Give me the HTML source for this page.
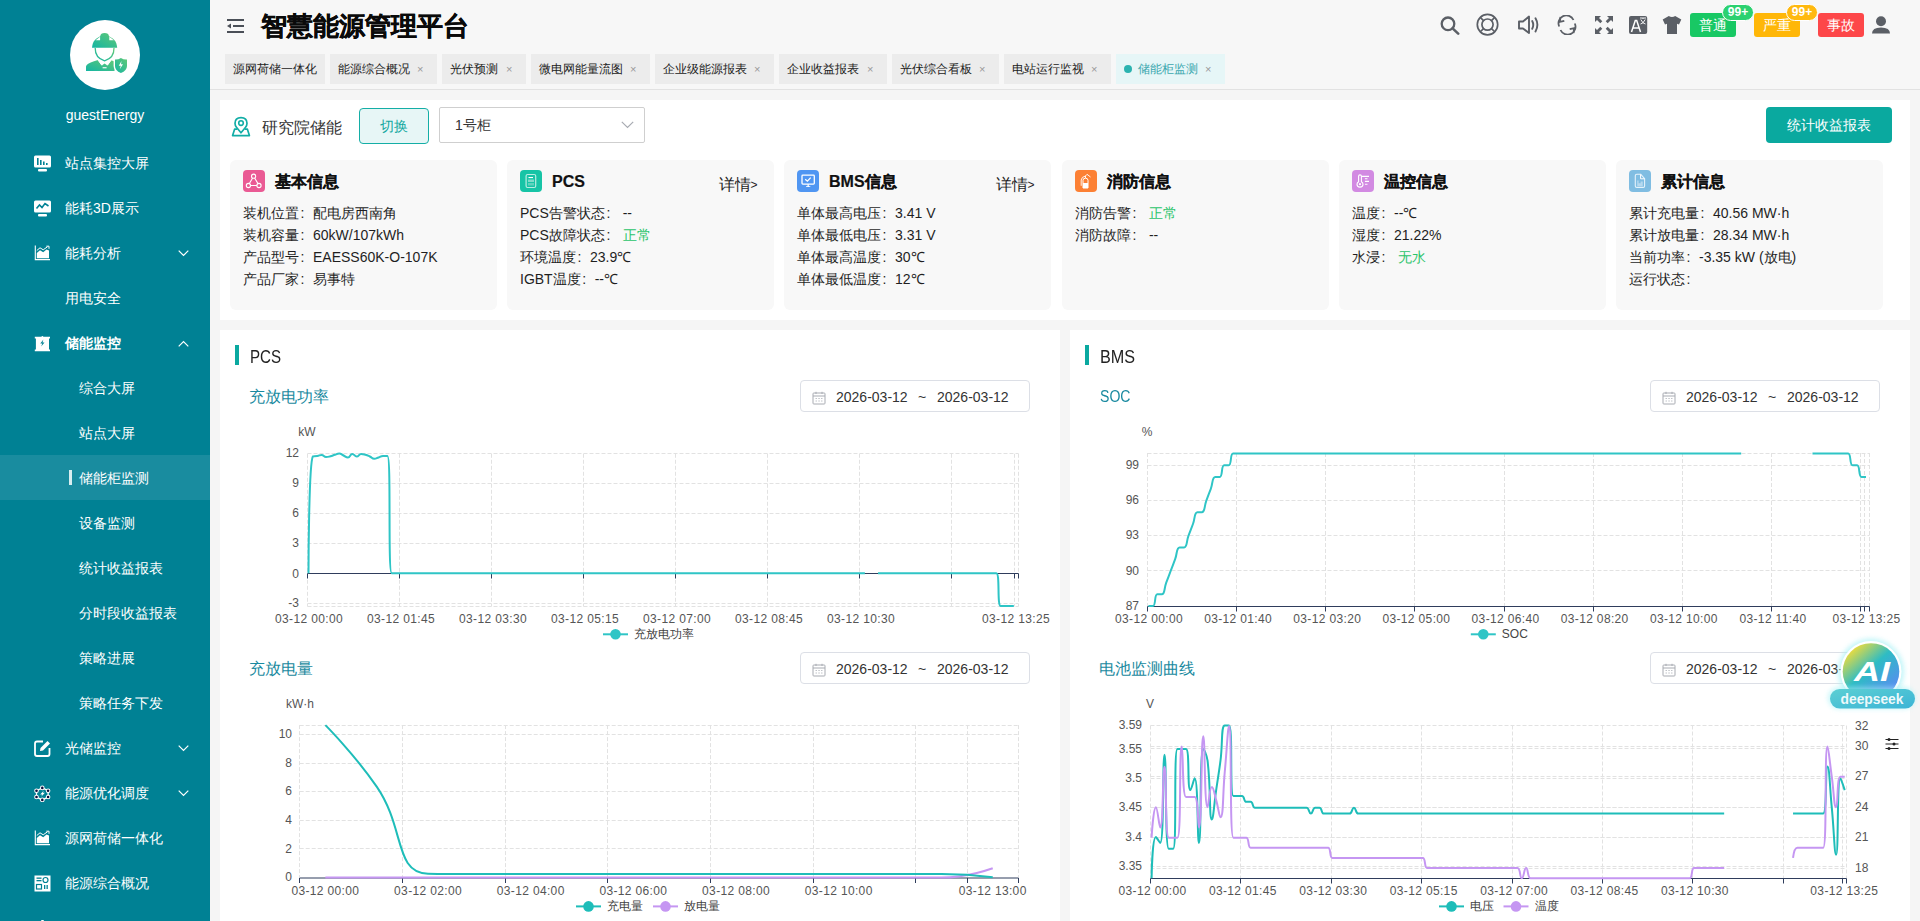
<!DOCTYPE html><html><head><meta charset="utf-8"><style>
*{box-sizing:border-box;margin:0;padding:0}
html,body{width:1920px;height:921px;overflow:hidden}
body{position:relative;background:#f5f5f5;font-family:"Liberation Sans",sans-serif;color:#333}
.a{position:absolute;white-space:nowrap}
#side{position:absolute;left:0;top:0;width:210px;height:921px;background:#008194;color:#fff;overflow:hidden}
#side .it{position:absolute;left:0;width:210px;height:45px;font-size:14px;line-height:45px}
#side .it span{position:absolute;left:65px;top:1px}
#side .sub span{left:79px}
#side .ic{position:absolute;left:34px;top:15px;width:17px;height:17px}
#side .chev{position:absolute;left:178px;top:20px;width:11px;height:7px}
#hdr{position:absolute;left:210px;top:0;width:1710px;height:90px;background:#f7f7f7;border-bottom:1px solid #e2e2e2}
.tab{position:absolute;top:54px;height:30px;background:#ececec;font-size:12px;line-height:30px;color:#222}
.tab b{position:absolute;left:8px;top:0;font-weight:normal}
.tab i{position:absolute;top:0;font-style:normal;color:#999;font-size:11px}
.panel{position:absolute;background:#fff}
.card{position:absolute;top:160px;width:267px;height:150px;background:#f8f8f8;border-radius:6px}
.card .ci{position:absolute;left:13px;top:10px;width:22px;height:22px;border-radius:4px}
.card .ct{position:absolute;left:45px;top:10px;font-size:16px;font-weight:bold;line-height:24px;color:#111;-webkit-text-stroke:0.2px #111}
.card .ln{position:absolute;left:13px;font-size:14px;line-height:22px;color:#1f1f1f}
.card .det{position:absolute;left:211.5px;top:14px;font-size:16px;line-height:22px;color:#1f1f1f}
.green{color:#2bc46b}
.cl{display:inline-block;width:14px;font-style:normal;padding-left:1.6px}
.sec{position:absolute;font-size:18px;color:#222;line-height:24px}
.bar{position:absolute;width:4px;height:20px;background:#0aa9a0}
.ctitle{position:absolute;font-size:16px;color:#1a8aa0;line-height:20px}
.dp{position:absolute;width:230px;height:32px;border:1px solid #dcdfe6;border-radius:4px;background:#fff;font-size:14px;color:#333}
.hic{position:absolute;top:14px}
.badge{position:absolute;top:13px;width:46px;height:24px;border-radius:3px;color:#fff;font-size:14px;line-height:24px;text-align:center}
.pill{position:absolute;top:4px;width:32px;height:17px;border-radius:9px;border:1px solid #fff;color:#fff;font-size:12px;font-weight:bold;line-height:15px;text-align:center}
</style></head><body>
<div id="side">
<div class="a" style="left:70px;top:20px;width:70px;height:70px;border-radius:50%;background:#fff"></div>
<svg class="a" style="left:75px;top:25px" width="60" height="60" viewBox="0 0 60 60">
<defs><linearGradient id="ag" x1="0" y1="1" x2="1" y2="0"><stop offset="0" stop-color="#14b5a3"/><stop offset="1" stop-color="#62c976"/></linearGradient></defs>
<path d="M17 22.8 L17.3 20.8 Q18 16 21.5 13.5 L25.2 11.2 Q25.6 8 29.6 8 Q33.6 8 34 11.2 L37.7 13.5 Q41.2 16 41.9 20.8 L42.2 22.8 Z" fill="url(#ag)"/><path d="M20.6 15.2 L25.1 11.8 L25.1 15.3 Z M38.9 15.2 L34.3 11.8 L34.3 15.3 Z" fill="#fff"/>
<path d="M20.2 23 Q20 33 29.6 35.8 Q39.2 33 39 23" stroke="url(#ag)" stroke-width="1.3" fill="none"/>
<path d="M11 46 V41.5 Q11.5 38.5 19 36.3 L23 35 L26.8 40.5 L29.6 38.5 L32.4 40.5 L36.2 35.2 L39.5 36.5 L39.5 46 Z" fill="url(#ag)"/>
<rect x="27.6" y="42.2" width="4" height="1.1" fill="#fff"/><path d="M23 35 L26.8 40.2 M36.2 35 L32.4 40.2" stroke="#fff" stroke-width="1"/>
<path d="M45.6 32.3 Q42.5 34.3 38.6 33.8 V41 Q38.6 46 45.6 48.6 Q52.4 46 52.4 41 V33.8 Q48.6 34.3 45.6 32.3 Z" fill="#fff"/>
<path d="M45.9 33 Q43.3 34.8 40 34.6 V41 Q40 45.5 45.9 48 Q52 45.5 52 41 V34.6 Q48.5 34.8 45.9 33 Z" fill="url(#ag)"/>
<path d="M46.5 36 L43.8 40.8 H45.8 L44.8 44.3 L48 39.3 H46 Z" fill="#fff"/>
</svg>
<div class="a" style="left:0;top:105px;width:210px;text-align:center;font-size:14px;line-height:20px">guestEnergy</div>
<div class="it" style="top:140px"><svg class="ic" viewBox="0 0 17 17"><rect x="0" y="0.5" width="17" height="12" rx="1.5" fill="#fff"/><rect x="3" y="3" width="1.6" height="7" fill="#008194"/><rect x="6" y="5" width="1.6" height="5" fill="#008194"/><rect x="9" y="6.5" width="1.6" height="3.5" fill="#008194"/><rect x="12" y="8" width="1.6" height="2" fill="#008194"/><rect x="4" y="14" width="9" height="2.5" rx="1" fill="#fff"/></svg><span style="">站点集控大屏</span></div>
<div class="it" style="top:185px"><svg class="ic" viewBox="0 0 17 17"><rect x="0" y="0.5" width="17" height="12" rx="1.5" fill="#fff"/><path d="M2.5 8.5 L5.5 5 L8 7.5 L11 3.5 L14.5 6" stroke="#008194" stroke-width="1.6" fill="none"/><rect x="4" y="14" width="9" height="2.5" rx="1" fill="#fff"/></svg><span style="">能耗3D展示</span></div>
<div class="it" style="top:230px"><svg class="ic" viewBox="0 0 17 17"><path d="M1.3 0.5 V14.6 H16" stroke="#fff" stroke-width="1.1" fill="none"/><path d="M2.8 13.3 V8 L6 5.2 L9.2 7.2 L12.5 4.5 L15 5.5 V13.3 Z" fill="#fff"/><path d="M2.8 5.5 L6 2.8 L9.2 4.8 L13.5 1.8" stroke="#fff" stroke-width="1" fill="none"/><path d="M12.3 1.2 H15 V3.8" stroke="#fff" stroke-width="1" fill="none"/></svg><span style="">能耗分析</span><svg class="chev" viewBox="0 0 11 7"><path d="M0.7 0.7 L5.5 5.5 L10.3 0.7" stroke="#fff" stroke-width="1.2" fill="none"/></svg></div>
<div class="it" style="top:275px"><span style="">用电安全</span></div>
<div class="it" style="top:320px"><svg class="ic" viewBox="0 0 17 17"><path d="M0.8 1.8 H7.3 Q8.4 0.3 9.5 1.8 H16 V3.6 H15 V14.4 H16 V16.2 H0.8 V14.4 H1.9 V3.6 H0.8 Z" fill="#fff"/><path d="M9.4 4.6 L6.3 8.6 H8.3 L7.2 11.5 L10.5 7.4 H8.5 Z" fill="#008194"/></svg><span style="font-weight:bold">储能监控</span><svg class="chev" viewBox="0 0 11 7"><path d="M0.7 6.3 L5.5 1.5 L10.3 6.3" stroke="#fff" stroke-width="1.2" fill="none"/></svg></div>
<div class="it sub" style="top:365px"><span style="">综合大屏</span></div>
<div class="it sub" style="top:410px"><span style="">站点大屏</span></div>
<div class="it sub" style="top:455px;background:#198c9f"><div class="a" style="left:69px;top:15px;width:3px;height:15px;background:#d8eef0"></div><span style="">储能柜监测</span></div>
<div class="it sub" style="top:500px"><span style="">设备监测</span></div>
<div class="it sub" style="top:545px"><span style="">统计收益报表</span></div>
<div class="it sub" style="top:590px"><span style="">分时段收益报表</span></div>
<div class="it sub" style="top:635px"><span style="">策略进展</span></div>
<div class="it sub" style="top:680px"><span style="">策略任务下发</span></div>
<div class="it" style="top:725px"><svg class="ic" viewBox="0 0 17 17"><path d="M9 1.5 H3 Q1 1.5 1 3.5 V14 Q1 16 3 16 H13.5 Q15.5 16 15.5 14 V8" stroke="#fff" stroke-width="1.8" fill="none"/><path d="M6 11 L6.5 8 L13.5 1 L16 3.5 L9 10.5 Z" fill="#fff"/></svg><span style="">光储监控</span><svg class="chev" viewBox="0 0 11 7"><path d="M0.7 0.7 L5.5 5.5 L10.3 0.7" stroke="#fff" stroke-width="1.2" fill="none"/></svg></div>
<div class="it" style="top:770px"><svg class="ic" viewBox="0 0 17 17"><path d="M8.3 2.9 L14.1 5.7 L14.1 12 L8.3 14.9 L2.5 12 L2.5 5.7 Z" stroke="#fff" stroke-width="1.3" fill="none"/><circle cx="8.3" cy="2.9" r="2.3" fill="#fff"/><circle cx="8.3" cy="2.9" r="1.3" fill="#0b0d3a"/><circle cx="14.1" cy="5.7" r="2.3" fill="#fff"/><circle cx="14.1" cy="5.7" r="1.3" fill="#0b0d3a"/><circle cx="14.1" cy="12" r="2.3" fill="#fff"/><circle cx="14.1" cy="12" r="1.3" fill="#0b0d3a"/><circle cx="8.3" cy="14.9" r="2.3" fill="#fff"/><circle cx="8.3" cy="14.9" r="1.3" fill="#0b0d3a"/><circle cx="2.5" cy="12" r="2.3" fill="#fff"/><circle cx="2.5" cy="12" r="1.3" fill="#0b0d3a"/><circle cx="2.5" cy="5.7" r="2.3" fill="#fff"/><circle cx="2.5" cy="5.7" r="1.3" fill="#0b0d3a"/><path d="M9.9 5.5 L6.2 9.5 H8.3 L7.2 11.8 L10.9 7.7 H8.7 Z" fill="#fff"/></svg><span style="">能源优化调度</span><svg class="chev" viewBox="0 0 11 7"><path d="M0.7 0.7 L5.5 5.5 L10.3 0.7" stroke="#fff" stroke-width="1.2" fill="none"/></svg></div>
<div class="it" style="top:815px"><svg class="ic" viewBox="0 0 17 17"><path d="M1.3 0.5 V14.6 H16" stroke="#fff" stroke-width="1.1" fill="none"/><path d="M2.8 13.3 V8 L6 5.2 L9.2 7.2 L12.5 4.5 L15 5.5 V13.3 Z" fill="#fff"/><path d="M2.8 5.5 L6 2.8 L9.2 4.8 L13.5 1.8" stroke="#fff" stroke-width="1" fill="none"/><path d="M12.3 1.2 H15 V3.8" stroke="#fff" stroke-width="1" fill="none"/></svg><span style="">源网荷储一体化</span></div>
<div class="it" style="top:860px"><svg class="ic" viewBox="0 0 17 17"><rect x="0.5" y="0.5" width="16" height="16" fill="#fff"/><rect x="2.5" y="2.5" width="5" height="1.3" fill="#008194"/><rect x="2.5" y="5" width="5" height="1.3" fill="#008194"/><circle cx="11.5" cy="5" r="2.5" stroke="#008194" stroke-width="1.2" fill="none"/><rect x="2.5" y="9.5" width="5" height="4.5" stroke="#008194" stroke-width="1.2" fill="none"/><rect x="10" y="10" width="1.3" height="4" fill="#008194"/><rect x="12.5" y="10" width="1.3" height="4" fill="#008194"/></svg><span style="">能源综合概况</span></div>
<div class="it" style="top:905px"><div class="a" style="left:41px;top:15px;width:3px;height:2px;background:#fff;border-radius:1px 1px 0 0"></div></div>
</div>
<div id="hdr">
<svg class="a" style="left:17px;top:19px" width="17" height="14" viewBox="0 0 17 14"><rect x="0" y="0" width="17" height="2" fill="#4a4f57"/><rect x="6" y="6" width="11" height="2" fill="#4a4f57"/><rect x="0" y="12" width="17" height="2" fill="#4a4f57"/><path d="M0 7 L4 4.5 V9.5 Z" fill="#4a4f57"/></svg>
<div class="a" style="left:51px;top:8px;font-size:26px;font-weight:bold;color:#0a0a0a;line-height:36px;-webkit-text-stroke:0.35px #0a0a0a">智慧能源管理平台</div>
<div class="tab" style="left:15px;width:100px"><b>源网荷储一体化</b></div>
<div class="tab" style="left:120px;width:107px"><b>能源综合概况</b><i style="left:87px">×</i></div>
<div class="tab" style="left:232px;width:84px"><b>光伏预测</b><i style="left:64px">×</i></div>
<div class="tab" style="left:321px;width:119px"><b>微电网能量流图</b><i style="left:99px">×</i></div>
<div class="tab" style="left:445px;width:119px"><b>企业级能源报表</b><i style="left:99px">×</i></div>
<div class="tab" style="left:569px;width:108px"><b>企业收益报表</b><i style="left:88px">×</i></div>
<div class="tab" style="left:682px;width:107px"><b>光伏综合看板</b><i style="left:87px">×</i></div>
<div class="tab" style="left:794px;width:107px"><b>电站运行监视</b><i style="left:87px">×</i></div>
<div class="tab" style="left:906px;width:109px;background:#e6f6f7;color:#3aa6ae"><div class="a" style="left:8px;top:11px;width:8px;height:8px;border-radius:50%;background:#2bb3b0"></div><b style="left:22px">储能柜监测</b><i style="left:89px">×</i></div>
</div>
<svg class="a" style="left:1440px;top:16px" width="20" height="19" viewBox="0 0 20 19"><circle cx="8" cy="7.8" r="6.3" stroke="#5b5f66" stroke-width="2.3" fill="none"/><path d="M12.6 12.4 L18.2 17.6" stroke="#5b5f66" stroke-width="2.6" stroke-linecap="round"/></svg>
<svg class="a" style="left:1476px;top:13px" width="23" height="23" viewBox="0 0 23 23"><circle cx="11.5" cy="11.6" r="10.2" stroke="#5b5f66" stroke-width="1.7" fill="none"/><circle cx="11.5" cy="11.6" r="5.6" stroke="#5b5f66" stroke-width="1.7" fill="none"/><path d="M4.3 4.4 L7.5 7.6 M18.7 4.4 L15.5 7.6 M4.3 18.8 L7.5 15.6 M18.7 18.8 L15.5 15.6" stroke="#5b5f66" stroke-width="1.6"/></svg>
<svg class="a" style="left:1517px;top:15px" width="23" height="20" viewBox="0 0 23 20"><path d="M2 6.5 H6 L12 1.5 V18 L6 13.5 H2 Z" stroke="#5b5f66" stroke-width="1.9" fill="none" stroke-linejoin="round"/><path d="M15.2 6 Q17.3 9.8 15.2 13.8" stroke="#5b5f66" stroke-width="1.9" fill="none" stroke-linecap="round"/><path d="M18.5 3.3 Q22.3 9.8 18.5 16.5" stroke="#5b5f66" stroke-width="1.9" fill="none" stroke-linecap="round"/></svg>
<svg class="a" style="left:1557px;top:15px" width="20" height="20" viewBox="0 0 20 20"><path d="M2.2 11.5 A7.8 7.8 0 0 1 16.5 5" stroke="#5b5f66" stroke-width="1.8" fill="none"/><path d="M17.8 8.5 A7.8 7.8 0 0 1 3.5 15" stroke="#5b5f66" stroke-width="1.8" fill="none"/><path d="M3.5 2 L2.8 6.8 L7.3 5.8" stroke="#5b5f66" stroke-width="1.8" fill="none"/><path d="M16.5 18 L17.2 13.2 L12.7 14.2" stroke="#5b5f66" stroke-width="1.8" fill="none"/></svg>
<svg class="a" style="left:1594px;top:15px" width="20" height="20" viewBox="0 0 20 20"><g fill="#5b5f66"><path d="M1 1 H7 L5 3 L8.3 6.3 L6.3 8.3 L3 5 L1 7 Z"/><path d="M19 1 H13 L15 3 L11.7 6.3 L13.7 8.3 L17 5 L19 7 Z"/><path d="M1 19 H7 L5 17 L8.3 13.7 L6.3 11.7 L3 15 L1 13 Z"/><path d="M19 19 H13 L15 17 L11.7 13.7 L13.7 11.7 L17 15 L19 13 Z"/></g></svg>
<svg class="a" style="left:1628px;top:15px" width="20" height="20" viewBox="0 0 20 20"><rect x="1" y="1" width="18.2" height="18" rx="2" fill="#5b5f66"/><path d="M3.5 17 L7.3 5.5 H8.7 L12.5 17 M5 13 H11" stroke="#fff" stroke-width="1.5" fill="none"/><path d="M12 3 H18 M15 3 V4 M12.8 4.5 Q15 9 17.5 9 M17.2 4.5 Q15 9 12.5 9" stroke="#fff" stroke-width="0.9" fill="none"/></svg>
<svg class="a" style="left:1662px;top:15px" width="20" height="20" viewBox="0 0 20 20"><path d="M6.8 1 Q10 3 13.2 1 L19.3 4.5 L17 9.5 L15 8.8 V19 H5 V8.8 L3 9.5 L0.7 4.5 Z" fill="#5b5f66"/></svg>
<svg class="a" style="left:1871px;top:15px" width="20" height="20" viewBox="0 0 20 20"><ellipse cx="10" cy="6.3" rx="5" ry="5" fill="#5b5f66"/><path d="M1 18.5 Q1 12.5 10 12.5 Q19 12.5 19 18.5 Z" fill="#5b5f66"/></svg>
<div class="badge" style="left:1690px;background:#18c864">普通</div>
<div class="pill" style="left:1722px;background:#2cd170">99+</div>
<div class="badge" style="left:1754px;background:#ffb708">严重</div>
<div class="pill" style="left:1786px;background:#ffb90f">99+</div>
<div class="badge" style="left:1818px;background:#fd4749">事故</div>
<div class="panel" style="left:220px;top:100px;width:1690px;height:220px"></div>
<svg class="a" style="left:230px;top:116px" width="22" height="22" viewBox="0 0 22 22"><path d="M11 16.8 L6.6 11.5 Q5 9.6 5 7.3 Q5 1.6 11 1.6 Q17 1.6 17 7.3 Q17 9.6 15.4 11.5 Z" stroke="#12ada6" stroke-width="1.7" fill="none" stroke-linejoin="round"/><circle cx="11" cy="7.1" r="2.3" stroke="#12ada6" stroke-width="1.6" fill="none"/><path d="M7.2 13.2 H4.6 L2.6 19.6 H19.4 L17.4 13.2 H14.8" stroke="#12ada6" stroke-width="1.7" fill="none" stroke-linejoin="round"/></svg>
<div class="a" style="left:262px;top:117px;font-size:16px;line-height:22px;color:#333">研究院储能</div>
<div class="a" style="left:359px;top:108px;width:70px;height:36px;border:1px solid #14aea6;border-radius:4px;background:#e7f6f6;color:#14a8a0;font-size:14px;line-height:34px;text-align:center">切换</div>
<div class="a" style="left:439px;top:107px;width:206px;height:36px;border:1px solid #cfcfcf;border-radius:2px;background:#fff;color:#333;font-size:14px;line-height:34px;padding-left:15px">1号柜</div>
<svg class="a" style="left:621px;top:121px" width="13" height="8" viewBox="0 0 13 8"><path d="M0.8 0.8 L6.5 6.5 L12.2 0.8" stroke="#a8abb2" stroke-width="1.2" fill="none"/></svg>
<div class="a" style="left:1766px;top:107px;width:126px;height:36px;border-radius:4px;background:#0aa99f;color:#fff;font-size:14px;line-height:36px;text-align:center">统计收益报表</div>
<div class="card" style="left:230px"><div class="ci" style="background:#ea5a94"><svg viewBox="0 0 22 22" width="22" height="22"><g stroke="#fff" stroke-width="1.1" fill="none"><circle cx="10.6" cy="6.2" r="2.1"/><circle cx="5.4" cy="15.5" r="2.1"/><circle cx="16" cy="15.5" r="2.1"/><path d="M9.6 8 L6.4 13.6 M11.6 8 L15 13.6 M7.5 15.5 H13.9"/></g></svg></div><div class="ct">基本信息</div><div class="ln" style="top:42px">装机位置<i class="cl">:</i>配电房西南角</div><div class="ln" style="top:64px">装机容量<i class="cl">:</i>60kW/107kWh</div><div class="ln" style="top:86px">产品型号<i class="cl">:</i>EAESS60K-O-107K</div><div class="ln" style="top:108px">产品厂家<i class="cl">:</i>易事特</div></div>
<div class="card" style="left:507px"><div class="ci" style="background:#17c4a6"><svg viewBox="0 0 22 22" width="22" height="22"><rect x="6.1" y="4.5" width="9.6" height="13" rx="1.5" stroke="#b9ede2" stroke-width="1.2" fill="none"/><rect x="8.5" y="7" width="4.5" height="1.1" fill="#fff"/><rect x="8" y="9.5" width="6" height="2.5" fill="#7fdccb"/><rect x="8" y="13" width="6" height="2.5" fill="#5fd3bd"/></svg></div><div class="ct">PCS</div><div class="det">详情<span style="font-size:12px;position:relative;top:-1px">&gt;</span></div><div class="ln" style="top:42px">PCS告警状态<i class="cl">:</i>&nbsp;--</div><div class="ln" style="top:64px">PCS故障状态<i class="cl">:</i><span class="green">&nbsp;正常</span></div><div class="ln" style="top:86px">环境温度<i class="cl">:</i>23.9℃</div><div class="ln" style="top:108px">IGBT温度<i class="cl">:</i>--℃</div></div>
<div class="card" style="left:784px"><div class="ci" style="background:#5096f2"><svg viewBox="0 0 22 22" width="22" height="22"><rect x="5" y="5.2" width="12.3" height="8.9" rx="0.8" stroke="#fff" stroke-width="1.3" fill="none"/><path d="M8.2 9.2 L10.4 11.2 L13.7 7.6" stroke="#fff" stroke-width="1.3" fill="none"/><path d="M10.5 14.2 H11.8 V16.3 H13.3 V17 H9 V16.3 H10.5 Z" fill="#fff"/></svg></div><div class="ct">BMS信息</div><div class="det">详情<span style="font-size:12px;position:relative;top:-1px">&gt;</span></div><div class="ln" style="top:42px">单体最高电压<i class="cl">:</i>3.41 V</div><div class="ln" style="top:64px">单体最低电压<i class="cl">:</i>3.31 V</div><div class="ln" style="top:86px">单体最高温度<i class="cl">:</i>30℃</div><div class="ln" style="top:108px">单体最低温度<i class="cl">:</i>12℃</div></div>
<div class="card" style="left:1062px"><div class="ci" style="background:#fc8034"><svg viewBox="0 0 22 22" width="22" height="22"><path d="M8 18 V10.3 Q8 8.2 10.5 8.2 Q13 8.2 13 10.3 V18 Z" fill="none" stroke="#fff" stroke-width="1"/><rect x="8" y="13" width="5" height="5" fill="#fff"/><path d="M6.2 15.8 V10 Q6.5 6.8 10.5 6 L12 4.3 L15.5 7 M10.5 6 L10.5 8" stroke="#fff" stroke-width="0.9" fill="none"/></svg></div><div class="ct">消防信息</div><div class="ln" style="top:42px">消防告警<i class="cl">:</i><span class="green">&nbsp;正常</span></div><div class="ln" style="top:64px">消防故障<i class="cl">:</i>&nbsp;--</div></div>
<div class="card" style="left:1339px"><div class="ci" style="background:#d28ae2"><svg viewBox="0 0 22 22" width="22" height="22"><path d="M6.6 11.8 V6.2 Q6.6 4.9 8 4.9 Q9.4 4.9 9.4 6.2 V11.8 Q11 12.8 11 14.3 Q11 17.1 8 17.1 Q5 17.1 5 14.3 Q5 12.8 6.6 11.8 Z" stroke="#fff" stroke-width="1.1" fill="none"/><circle cx="8" cy="14.2" r="1.1" fill="#fff"/><path d="M9.4 6.4 H17 M12.9 8.7 H15.5 M12.9 11.4 H17 M12.9 14.2 H15.5" stroke="#fff" stroke-width="1.1"/></svg></div><div class="ct">温控信息</div><div class="ln" style="top:42px">温度<i class="cl">:</i>--℃</div><div class="ln" style="top:64px">湿度<i class="cl">:</i>21.22%</div><div class="ln" style="top:86px">水浸<i class="cl">:</i><span class="green">&nbsp;无水</span></div></div>
<div class="card" style="left:1616px"><div class="ci" style="background:#80bde2"><svg viewBox="0 0 22 22" width="22" height="22"><path d="M6.3 5.8 Q6.3 4.3 7.8 4.3 H11.8 L15.6 8.6 V16 Q15.6 17.4 14.2 17.4 H7.8 Q6.3 17.4 6.3 16 Z" stroke="#e5f3fb" stroke-width="1.1" fill="none"/><path d="M11.6 4.5 V8.8 H15.4" stroke="#fff" stroke-width="1" fill="none"/><path d="M8.2 16.3 V10.5 H9.6 V13.3 H11.6 V11.5 H13.8 V16.3 Z" fill="#b6d9ef"/></svg></div><div class="ct">累计信息</div><div class="ln" style="top:42px">累计充电量<i class="cl">:</i>40.56 MW·h</div><div class="ln" style="top:64px">累计放电量<i class="cl">:</i>28.34 MW·h</div><div class="ln" style="top:86px">当前功率<i class="cl">:</i>-3.35 kW (放电)</div><div class="ln" style="top:108px">运行状态<i class="cl">:</i></div></div>
<div class="panel" style="left:220px;top:330px;width:840px;height:600px"></div>
<div class="panel" style="left:1070px;top:330px;width:840px;height:600px"></div>
<div class="bar" style="left:235px;top:345px"></div>
<div class="sec" style="left:250px;top:344.5px;transform:scaleX(0.84);transform-origin:0 0">PCS</div>
<div class="bar" style="left:1085px;top:345px"></div>
<div class="sec" style="left:1100px;top:344.5px;transform:scaleX(0.9);transform-origin:0 0">BMS</div>
<div class="ctitle" style="left:249px;top:387px">充放电功率</div>
<div class="ctitle" style="left:249px;top:659px">充放电量</div>
<div class="ctitle" style="left:1100px;top:387px;transform:scaleX(0.88);transform-origin:0 0">SOC</div>
<div class="ctitle" style="left:1099px;top:659px">电池监测曲线</div>
<div class="dp" style="left:800px;top:380px"><svg class="a" style="left:11px;top:10px" width="14" height="14" viewBox="0 0 14 14"><rect x="1" y="2" width="12" height="11" rx="0.8" stroke="#a8abb2" stroke-width="1" fill="none"/><path d="M1 5 H13 M4 0.8 V3 M10 0.8 V3" stroke="#a8abb2" stroke-width="1"/><path d="M3.5 7.5 H5 M6.3 7.5 H7.8 M9 7.5 H10.5 M3.5 10 H5 M6.3 10 H7.8 M9 10 H10.5" stroke="#c0c3c8" stroke-width="1"/></svg><span class="a" style="left:35px;top:8px;line-height:16px">2026-03-12</span><span class="a" style="left:117px;top:8px;line-height:16px">~</span><span class="a" style="left:136px;top:8px;line-height:16px">2026-03-12</span></div>
<div class="dp" style="left:800px;top:652px"><svg class="a" style="left:11px;top:10px" width="14" height="14" viewBox="0 0 14 14"><rect x="1" y="2" width="12" height="11" rx="0.8" stroke="#a8abb2" stroke-width="1" fill="none"/><path d="M1 5 H13 M4 0.8 V3 M10 0.8 V3" stroke="#a8abb2" stroke-width="1"/><path d="M3.5 7.5 H5 M6.3 7.5 H7.8 M9 7.5 H10.5 M3.5 10 H5 M6.3 10 H7.8 M9 10 H10.5" stroke="#c0c3c8" stroke-width="1"/></svg><span class="a" style="left:35px;top:8px;line-height:16px">2026-03-12</span><span class="a" style="left:117px;top:8px;line-height:16px">~</span><span class="a" style="left:136px;top:8px;line-height:16px">2026-03-12</span></div>
<div class="dp" style="left:1650px;top:380px"><svg class="a" style="left:11px;top:10px" width="14" height="14" viewBox="0 0 14 14"><rect x="1" y="2" width="12" height="11" rx="0.8" stroke="#a8abb2" stroke-width="1" fill="none"/><path d="M1 5 H13 M4 0.8 V3 M10 0.8 V3" stroke="#a8abb2" stroke-width="1"/><path d="M3.5 7.5 H5 M6.3 7.5 H7.8 M9 7.5 H10.5 M3.5 10 H5 M6.3 10 H7.8 M9 10 H10.5" stroke="#c0c3c8" stroke-width="1"/></svg><span class="a" style="left:35px;top:8px;line-height:16px">2026-03-12</span><span class="a" style="left:117px;top:8px;line-height:16px">~</span><span class="a" style="left:136px;top:8px;line-height:16px">2026-03-12</span></div>
<div class="dp" style="left:1650px;top:652px"><svg class="a" style="left:11px;top:10px" width="14" height="14" viewBox="0 0 14 14"><rect x="1" y="2" width="12" height="11" rx="0.8" stroke="#a8abb2" stroke-width="1" fill="none"/><path d="M1 5 H13 M4 0.8 V3 M10 0.8 V3" stroke="#a8abb2" stroke-width="1"/><path d="M3.5 7.5 H5 M6.3 7.5 H7.8 M9 7.5 H10.5 M3.5 10 H5 M6.3 10 H7.8 M9 10 H10.5" stroke="#c0c3c8" stroke-width="1"/></svg><span class="a" style="left:35px;top:8px;line-height:16px">2026-03-12</span><span class="a" style="left:117px;top:8px;line-height:16px">~</span><span class="a" style="left:136px;top:8px;line-height:16px">2026-03-12</span></div>
<svg class="a" style="left:0;top:0" width="1920" height="921" viewBox="0 0 1920 921" font-family="Liberation Sans, sans-serif"><line x1="307.5" y1="453.5" x2="1018.5" y2="453.5" stroke="#e2e2e2" stroke-width="1" stroke-dasharray="4 2"/><text x="299" y="457.4000000000001" text-anchor="end" font-size="12" fill="#555">12</text><line x1="307.5" y1="483.5" x2="1018.5" y2="483.5" stroke="#e2e2e2" stroke-width="1" stroke-dasharray="4 2"/><text x="299" y="487.25000000000006" text-anchor="end" font-size="12" fill="#555">9</text><line x1="307.5" y1="513.5" x2="1018.5" y2="513.5" stroke="#e2e2e2" stroke-width="1" stroke-dasharray="4 2"/><text x="299" y="517.1" text-anchor="end" font-size="12" fill="#555">6</text><line x1="307.5" y1="543.5" x2="1018.5" y2="543.5" stroke="#e2e2e2" stroke-width="1" stroke-dasharray="4 2"/><text x="299" y="546.95" text-anchor="end" font-size="12" fill="#555">3</text><line x1="307.5" y1="603.5" x2="1018.5" y2="603.5" stroke="#e2e2e2" stroke-width="1" stroke-dasharray="4 2"/><text x="299" y="606.6500000000001" text-anchor="end" font-size="12" fill="#555">-3</text><text x="299" y="577.5" text-anchor="end" font-size="12" fill="#555">0</text><line x1="307.5" y1="606.5" x2="1018.5" y2="606.5" stroke="#e2e2e2" stroke-width="1" stroke-dasharray="4 2"/><line x1="307.5" y1="453.8" x2="307.5" y2="606.5" stroke="#e2e2e2" stroke-width="1" stroke-dasharray="4 2"/><line x1="399.5" y1="453.8" x2="399.5" y2="606.5" stroke="#e2e2e2" stroke-width="1" stroke-dasharray="4 2"/><line x1="491.5" y1="453.8" x2="491.5" y2="606.5" stroke="#e2e2e2" stroke-width="1" stroke-dasharray="4 2"/><line x1="583.5" y1="453.8" x2="583.5" y2="606.5" stroke="#e2e2e2" stroke-width="1" stroke-dasharray="4 2"/><line x1="675.5" y1="453.8" x2="675.5" y2="606.5" stroke="#e2e2e2" stroke-width="1" stroke-dasharray="4 2"/><line x1="767.5" y1="453.8" x2="767.5" y2="606.5" stroke="#e2e2e2" stroke-width="1" stroke-dasharray="4 2"/><line x1="859.5" y1="453.8" x2="859.5" y2="606.5" stroke="#e2e2e2" stroke-width="1" stroke-dasharray="4 2"/><line x1="951.5" y1="453.8" x2="951.5" y2="606.5" stroke="#e2e2e2" stroke-width="1" stroke-dasharray="4 2"/><line x1="1014.5" y1="453.8" x2="1014.5" y2="606.5" stroke="#e2e2e2" stroke-width="1" stroke-dasharray="4 2"/><line x1="1018.5" y1="453.8" x2="1018.5" y2="606.5" stroke="#e2e2e2" stroke-width="1" stroke-dasharray="4 2"/><line x1="307.5" y1="573.5" x2="1018.5" y2="573.5" stroke="#2f3d5c" stroke-width="1"/><line x1="307.5" y1="573.5" x2="307.5" y2="578.5" stroke="#2f3d5c" stroke-width="1"/><line x1="399.5" y1="573.5" x2="399.5" y2="578.5" stroke="#2f3d5c" stroke-width="1"/><line x1="491.5" y1="573.5" x2="491.5" y2="578.5" stroke="#2f3d5c" stroke-width="1"/><line x1="583.5" y1="573.5" x2="583.5" y2="578.5" stroke="#2f3d5c" stroke-width="1"/><line x1="675.5" y1="573.5" x2="675.5" y2="578.5" stroke="#2f3d5c" stroke-width="1"/><line x1="767.5" y1="573.5" x2="767.5" y2="578.5" stroke="#2f3d5c" stroke-width="1"/><line x1="859.5" y1="573.5" x2="859.5" y2="578.5" stroke="#2f3d5c" stroke-width="1"/><line x1="951.5" y1="573.5" x2="951.5" y2="578.5" stroke="#2f3d5c" stroke-width="1"/><line x1="1014.5" y1="573.5" x2="1014.5" y2="578.5" stroke="#2f3d5c" stroke-width="1"/><line x1="1018.5" y1="573.5" x2="1018.5" y2="578.5" stroke="#2f3d5c" stroke-width="1"/><text x="309.0" y="623" text-anchor="middle" font-size="12" fill="#555" letter-spacing="0.35">03-12 00:00</text><text x="401.001" y="623" text-anchor="middle" font-size="12" fill="#555" letter-spacing="0.35">03-12 01:45</text><text x="493.002" y="623" text-anchor="middle" font-size="12" fill="#555" letter-spacing="0.35">03-12 03:30</text><text x="585.003" y="623" text-anchor="middle" font-size="12" fill="#555" letter-spacing="0.35">03-12 05:15</text><text x="677.004" y="623" text-anchor="middle" font-size="12" fill="#555" letter-spacing="0.35">03-12 07:00</text><text x="769.005" y="623" text-anchor="middle" font-size="12" fill="#555" letter-spacing="0.35">03-12 08:45</text><text x="861.0060000000001" y="623" text-anchor="middle" font-size="12" fill="#555" letter-spacing="0.35">03-12 10:30</text><text x="1016" y="623" text-anchor="middle" font-size="12" fill="#555" letter-spacing="0.35">03-12 13:25</text><text x="307" y="436" text-anchor="middle" font-size="12" fill="#555">kW</text><path d="M308.50 573.20 C308.50 573.20 308.66 464.24 312.88 456.29 C313.04 455.99 315.10 456.29 317.26 455.99 C319.48 455.68 319.54 454.99 321.64 454.99 C323.92 454.99 323.74 457.08 326.02 457.08 C328.12 457.08 328.26 456.85 330.40 456.29 C332.64 455.70 332.59 455.52 334.79 454.80 C336.97 454.08 337.04 453.40 339.17 453.40 C341.42 453.40 341.36 454.45 343.55 455.49 C345.74 456.54 345.92 457.58 347.93 457.58 C350.30 457.58 350.00 453.90 352.31 453.90 C354.38 453.90 354.50 456.59 356.69 456.59 C358.88 456.59 358.72 453.90 361.07 453.90 C363.11 453.90 363.33 454.07 365.45 454.70 C367.71 455.36 367.69 455.49 369.83 456.49 C372.07 457.53 371.94 458.78 374.22 458.78 C376.32 458.78 376.42 458.17 378.60 457.48 C380.80 456.78 380.73 455.99 382.98 455.99 C385.11 455.99 387.20 455.99 387.36 455.99 C391.58 455.99 387.52 573.20 391.74 573.20 C391.90 573.20 393.93 573.20 396.12 573.20 C398.31 573.20 398.31 573.20 400.50 573.20 C402.69 573.20 402.69 573.20 404.88 573.20 C407.07 573.20 407.07 573.20 409.26 573.20 C411.45 573.20 411.45 573.20 413.64 573.20 C415.83 573.20 415.83 573.20 418.02 573.20 C420.22 573.20 420.22 573.20 422.41 573.20 C424.60 573.20 424.60 573.20 426.79 573.20 C428.98 573.20 428.98 573.20 431.17 573.20 C433.36 573.20 433.36 573.20 435.55 573.20 C437.74 573.20 437.74 573.20 439.93 573.20 C442.12 573.20 442.12 573.20 444.31 573.20 C446.50 573.20 446.50 573.20 448.69 573.20 C450.88 573.20 450.88 573.20 453.07 573.20 C455.26 573.20 455.26 573.20 457.45 573.20 C459.64 573.20 459.64 573.20 461.84 573.20 C464.03 573.20 464.03 573.20 466.22 573.20 C468.41 573.20 468.41 573.20 470.60 573.20 C472.79 573.20 472.79 573.20 474.98 573.20 C477.17 573.20 477.17 573.20 479.36 573.20 C481.55 573.20 481.55 573.20 483.74 573.20 C485.93 573.20 485.93 573.20 488.12 573.20 C490.31 573.20 490.31 573.20 492.50 573.20 C494.69 573.20 494.69 573.20 496.88 573.20 C499.07 573.20 499.07 573.20 501.26 573.20 C503.45 573.20 503.45 573.20 505.64 573.20 C507.84 573.20 507.84 573.20 510.03 573.20 C512.22 573.20 512.22 573.20 514.41 573.20 C516.60 573.20 516.60 573.20 518.79 573.20 C520.98 573.20 520.98 573.20 523.17 573.20 C525.36 573.20 525.36 573.20 527.55 573.20 C529.74 573.20 529.74 573.20 531.93 573.20 C534.12 573.20 534.12 573.20 536.31 573.20 C538.50 573.20 538.50 573.20 540.69 573.20 C542.88 573.20 542.88 573.20 545.07 573.20 C547.26 573.20 547.26 573.20 549.46 573.20 C551.65 573.20 551.65 573.20 553.84 573.20 C556.03 573.20 556.03 573.20 558.22 573.20 C560.41 573.20 560.41 573.20 562.60 573.20 C564.79 573.20 564.79 573.20 566.98 573.20 C569.17 573.20 569.17 573.20 571.36 573.20 C573.55 573.20 573.55 573.20 575.74 573.20 C577.93 573.20 577.93 573.20 580.12 573.20 C582.31 573.20 582.31 573.20 584.50 573.20 C586.69 573.20 586.69 573.20 588.88 573.20 C591.07 573.20 591.07 573.20 593.26 573.20 C595.46 573.20 595.46 573.20 597.65 573.20 C599.84 573.20 599.84 573.20 602.03 573.20 C604.22 573.20 604.22 573.20 606.41 573.20 C608.60 573.20 608.60 573.20 610.79 573.20 C612.98 573.20 612.98 573.20 615.17 573.20 C617.36 573.20 617.36 573.20 619.55 573.20 C621.74 573.20 621.74 573.20 623.93 573.20 C626.12 573.20 626.12 573.20 628.31 573.20 C630.50 573.20 630.50 573.20 632.69 573.20 C634.88 573.20 634.88 573.20 637.08 573.20 C639.27 573.20 639.27 573.20 641.46 573.20 C643.65 573.20 643.65 573.20 645.84 573.20 C648.03 573.20 648.03 573.20 650.22 573.20 C652.41 573.20 652.41 573.20 654.60 573.20 C656.79 573.20 656.79 573.20 658.98 573.20 C661.17 573.20 661.17 573.20 663.36 573.20 C665.55 573.20 665.55 573.20 667.74 573.20 C669.93 573.20 669.93 573.20 672.12 573.20 C674.31 573.20 674.31 573.20 676.50 573.20 C678.69 573.20 678.69 573.20 680.88 573.20 C683.08 573.20 683.08 573.20 685.27 573.20 C687.46 573.20 687.46 573.20 689.65 573.20 C691.84 573.20 691.84 573.20 694.03 573.20 C696.22 573.20 696.22 573.20 698.41 573.20 C700.60 573.20 700.60 573.20 702.79 573.20 C704.98 573.20 704.98 573.20 707.17 573.20 C709.36 573.20 709.36 573.20 711.55 573.20 C713.74 573.20 713.74 573.20 715.93 573.20 C718.12 573.20 718.12 573.20 720.31 573.20 C722.50 573.20 722.50 573.20 724.70 573.20 C726.89 573.20 726.89 573.20 729.08 573.20 C731.27 573.20 731.27 573.20 733.46 573.20 C735.65 573.20 735.65 573.20 737.84 573.20 C740.03 573.20 740.03 573.20 742.22 573.20 C744.41 573.20 744.41 573.20 746.60 573.20 C748.79 573.20 748.79 573.20 750.98 573.20 C753.17 573.20 753.17 573.20 755.36 573.20 C757.55 573.20 757.55 573.20 759.74 573.20 C761.93 573.20 761.93 573.20 764.12 573.20 C766.31 573.20 766.31 573.20 768.50 573.20 C770.70 573.20 770.70 573.20 772.89 573.20 C775.08 573.20 775.08 573.20 777.27 573.20 C779.46 573.20 779.46 573.20 781.65 573.20 C783.84 573.20 783.84 573.20 786.03 573.20 C788.22 573.20 788.22 573.20 790.41 573.20 C792.60 573.20 792.60 573.20 794.79 573.20 C796.98 573.20 796.98 573.20 799.17 573.20 C801.36 573.20 801.36 573.20 803.55 573.20 C805.74 573.20 805.74 573.20 807.93 573.20 C810.12 573.20 810.12 573.20 812.32 573.20 C814.51 573.20 814.51 573.20 816.70 573.20 C818.89 573.20 818.89 573.20 821.08 573.20 C823.27 573.20 823.27 573.20 825.46 573.20 C827.65 573.20 827.65 573.20 829.84 573.20 C832.03 573.20 832.03 573.20 834.22 573.20 C836.41 573.20 836.41 573.20 838.60 573.20 C840.79 573.20 840.79 573.20 842.98 573.20 C845.17 573.20 845.17 573.20 847.36 573.20 C849.55 573.20 849.55 573.20 851.74 573.20 C853.93 573.20 853.93 573.20 856.12 573.20 C858.32 573.20 858.32 573.20 860.51 573.20 C862.70 573.20 864.89 573.20 864.89 573.20" stroke="#2fc5c6" stroke-width="2" fill="none" stroke-linejoin="round"/><path d="M878.03 573.20 C878.03 573.20 880.22 573.20 882.41 573.20 C884.60 573.20 884.60 573.20 886.79 573.20 C888.98 573.20 888.98 573.20 891.17 573.20 C893.36 573.20 893.36 573.20 895.55 573.20 C897.74 573.20 897.74 573.20 899.94 573.20 C902.13 573.20 902.13 573.20 904.32 573.20 C906.51 573.20 906.51 573.20 908.70 573.20 C910.89 573.20 910.89 573.20 913.08 573.20 C915.27 573.20 915.27 573.20 917.46 573.20 C919.65 573.20 919.65 573.20 921.84 573.20 C924.03 573.20 924.03 573.20 926.22 573.20 C928.41 573.20 928.41 573.20 930.60 573.20 C932.79 573.20 932.79 573.20 934.98 573.20 C937.17 573.20 937.17 573.20 939.36 573.20 C941.55 573.20 941.55 573.20 943.75 573.20 C945.94 573.20 945.94 573.20 948.13 573.20 C950.32 573.20 950.32 573.20 952.51 573.20 C954.70 573.20 954.70 573.20 956.89 573.20 C959.08 573.20 959.08 573.20 961.27 573.20 C963.46 573.20 963.46 573.20 965.65 573.20 C967.84 573.20 967.84 573.20 970.03 573.20 C972.22 573.20 972.22 573.20 974.41 573.20 C976.60 573.20 976.60 573.20 978.79 573.20 C980.98 573.20 980.98 573.20 983.17 573.20 C985.36 573.20 985.36 573.20 987.56 573.20 C989.75 573.20 989.75 573.20 991.94 573.20 C994.13 573.20 995.81 573.20 996.32 573.20 C1000.19 573.20 996.83 606.04 1000.70 606.04 C1001.21 606.04 1002.89 606.04 1005.08 606.04 C1007.27 606.04 1007.27 606.04 1009.46 606.04 C1011.65 606.04 1013.84 606.04 1013.84 606.04" stroke="#2fc5c6" stroke-width="2" fill="none" stroke-linejoin="round"/><line x1="603" y1="634.3" x2="628" y2="634.3" stroke="#2fc5c6" stroke-width="2"/><circle cx="615.5" cy="634.3" r="5.3" fill="#2fc5c6"/><text x="634" y="638.0999999999999" text-anchor="start" font-size="12" fill="#444">充放电功率</text><line x1="299.7" y1="725.5" x2="1018.4" y2="725.5" stroke="#e2e2e2" stroke-width="1" stroke-dasharray="4 2"/><line x1="299.7" y1="734.5" x2="1018.4" y2="734.5" stroke="#e2e2e2" stroke-width="1" stroke-dasharray="4 2"/><line x1="299.7" y1="763.5" x2="1018.4" y2="763.5" stroke="#e2e2e2" stroke-width="1" stroke-dasharray="4 2"/><line x1="299.7" y1="791.5" x2="1018.4" y2="791.5" stroke="#e2e2e2" stroke-width="1" stroke-dasharray="4 2"/><line x1="299.7" y1="820.5" x2="1018.4" y2="820.5" stroke="#e2e2e2" stroke-width="1" stroke-dasharray="4 2"/><line x1="299.7" y1="848.5" x2="1018.4" y2="848.5" stroke="#e2e2e2" stroke-width="1" stroke-dasharray="4 2"/><text x="292" y="738.0000000000001" text-anchor="end" font-size="12" fill="#555">10</text><text x="292" y="766.64" text-anchor="end" font-size="12" fill="#555">8</text><text x="292" y="795.2800000000001" text-anchor="end" font-size="12" fill="#555">6</text><text x="292" y="823.9200000000001" text-anchor="end" font-size="12" fill="#555">4</text><text x="292" y="852.5600000000001" text-anchor="end" font-size="12" fill="#555">2</text><text x="292" y="881.2" text-anchor="end" font-size="12" fill="#555">0</text><line x1="299.5" y1="725.1" x2="299.5" y2="877.6" stroke="#e2e2e2" stroke-width="1" stroke-dasharray="4 2"/><line x1="402.5" y1="725.1" x2="402.5" y2="877.6" stroke="#e2e2e2" stroke-width="1" stroke-dasharray="4 2"/><line x1="505.5" y1="725.1" x2="505.5" y2="877.6" stroke="#e2e2e2" stroke-width="1" stroke-dasharray="4 2"/><line x1="607.5" y1="725.1" x2="607.5" y2="877.6" stroke="#e2e2e2" stroke-width="1" stroke-dasharray="4 2"/><line x1="710.5" y1="725.1" x2="710.5" y2="877.6" stroke="#e2e2e2" stroke-width="1" stroke-dasharray="4 2"/><line x1="813.5" y1="725.1" x2="813.5" y2="877.6" stroke="#e2e2e2" stroke-width="1" stroke-dasharray="4 2"/><line x1="915.5" y1="725.1" x2="915.5" y2="877.6" stroke="#e2e2e2" stroke-width="1" stroke-dasharray="4 2"/><line x1="967.5" y1="725.1" x2="967.5" y2="877.6" stroke="#e2e2e2" stroke-width="1" stroke-dasharray="4 2"/><line x1="1018.5" y1="725.1" x2="1018.5" y2="877.6" stroke="#e2e2e2" stroke-width="1" stroke-dasharray="4 2"/><line x1="299.7" y1="878" x2="1018.4" y2="878" stroke="#2f3d5c" stroke-width="1"/><line x1="299.5" y1="878" x2="299.5" y2="883" stroke="#2f3d5c" stroke-width="1"/><line x1="402.5" y1="878" x2="402.5" y2="883" stroke="#2f3d5c" stroke-width="1"/><line x1="505.5" y1="878" x2="505.5" y2="883" stroke="#2f3d5c" stroke-width="1"/><line x1="607.5" y1="878" x2="607.5" y2="883" stroke="#2f3d5c" stroke-width="1"/><line x1="710.5" y1="878" x2="710.5" y2="883" stroke="#2f3d5c" stroke-width="1"/><line x1="813.5" y1="878" x2="813.5" y2="883" stroke="#2f3d5c" stroke-width="1"/><line x1="915.5" y1="878" x2="915.5" y2="883" stroke="#2f3d5c" stroke-width="1"/><line x1="967.5" y1="878" x2="967.5" y2="883" stroke="#2f3d5c" stroke-width="1"/><line x1="1018.5" y1="878" x2="1018.5" y2="883" stroke="#2f3d5c" stroke-width="1"/><text x="325.36785714285713" y="895" text-anchor="middle" font-size="12" fill="#555" letter-spacing="0.35">03-12 00:00</text><text x="428.0392857142857" y="895" text-anchor="middle" font-size="12" fill="#555" letter-spacing="0.35">03-12 02:00</text><text x="530.7107142857143" y="895" text-anchor="middle" font-size="12" fill="#555" letter-spacing="0.35">03-12 04:00</text><text x="633.3821428571429" y="895" text-anchor="middle" font-size="12" fill="#555" letter-spacing="0.35">03-12 06:00</text><text x="736.0535714285714" y="895" text-anchor="middle" font-size="12" fill="#555" letter-spacing="0.35">03-12 08:00</text><text x="838.7250000000001" y="895" text-anchor="middle" font-size="12" fill="#555" letter-spacing="0.35">03-12 10:00</text><text x="992.7321428571429" y="895" text-anchor="middle" font-size="12" fill="#555" letter-spacing="0.35">03-12 13:00</text><text x="300" y="708" text-anchor="middle" font-size="12" fill="#555">kW·h</text><path d="M325.37 877.60 C325.37 877.60 351.04 877.60 376.70 877.60 C402.37 877.60 402.37 877.60 428.04 877.60 C453.71 877.60 453.71 877.60 479.38 877.60 C505.04 877.60 505.04 877.60 530.71 877.60 C556.38 877.60 556.38 877.60 582.05 877.60 C607.71 877.60 607.71 877.60 633.38 877.60 C659.05 877.60 659.05 877.60 684.72 877.60 C710.39 877.60 710.39 877.60 736.05 877.60 C761.72 877.60 761.72 877.60 787.39 877.60 C813.06 877.60 813.06 877.60 838.73 877.60 C864.39 877.60 864.39 877.60 890.06 877.60 C915.73 877.60 915.94 877.60 941.40 877.60 C967.27 877.60 992.73 868.29 992.73 868.29" stroke="#c596f2" stroke-width="2" fill="none" stroke-linejoin="round"/><path d="M325.37 725.09 C325.37 725.09 354.00 753.79 376.70 786.67 C405.33 828.11 394.00 873.17 428.04 873.73 C445.33 874.02 453.71 874.02 479.38 874.02 C505.04 874.02 505.04 874.02 530.71 874.02 C556.38 874.02 556.38 874.02 582.05 874.02 C607.71 874.02 607.71 874.02 633.38 874.02 C659.05 874.02 659.05 874.02 684.72 874.02 C710.39 874.02 710.39 874.02 736.05 874.02 C761.72 874.02 761.72 874.02 787.39 874.02 C813.06 874.02 813.06 874.02 838.73 874.02 C864.39 874.02 864.39 874.02 890.06 874.02 C915.73 874.02 915.75 874.02 941.40 874.02 C967.09 874.02 992.73 877.31 992.73 877.31" stroke="#1ebdb9" stroke-width="2" fill="none" stroke-linejoin="round"/><line x1="576" y1="906.4" x2="601" y2="906.4" stroke="#1ebdb9" stroke-width="2"/><circle cx="588.5" cy="906.4" r="5.3" fill="#1ebdb9"/><text x="607" y="910.1999999999999" text-anchor="start" font-size="12" fill="#444">充电量</text><line x1="653" y1="906.4" x2="678" y2="906.4" stroke="#c596f2" stroke-width="2"/><circle cx="665.5" cy="906.4" r="5.3" fill="#c596f2"/><text x="684" y="910.1999999999999" text-anchor="start" font-size="12" fill="#444">放电量</text><line x1="1147.5" y1="453.5" x2="1869.5" y2="453.5" stroke="#e2e2e2" stroke-width="1" stroke-dasharray="4 2"/><line x1="1147.5" y1="465.5" x2="1869.5" y2="465.5" stroke="#e2e2e2" stroke-width="1" stroke-dasharray="4 2"/><line x1="1147.5" y1="500.5" x2="1869.5" y2="500.5" stroke="#e2e2e2" stroke-width="1" stroke-dasharray="4 2"/><line x1="1147.5" y1="535.5" x2="1869.5" y2="535.5" stroke="#e2e2e2" stroke-width="1" stroke-dasharray="4 2"/><line x1="1147.5" y1="570.5" x2="1869.5" y2="570.5" stroke="#e2e2e2" stroke-width="1" stroke-dasharray="4 2"/><text x="1139" y="468.94000000000005" text-anchor="end" font-size="12" fill="#555">99</text><text x="1139" y="504.13000000000005" text-anchor="end" font-size="12" fill="#555">96</text><text x="1139" y="539.32" text-anchor="end" font-size="12" fill="#555">93</text><text x="1139" y="574.5100000000001" text-anchor="end" font-size="12" fill="#555">90</text><text x="1139" y="609.7" text-anchor="end" font-size="12" fill="#555">87</text><line x1="1147.5" y1="453" x2="1147.5" y2="606.1" stroke="#e2e2e2" stroke-width="1" stroke-dasharray="4 2"/><line x1="1236.5" y1="453" x2="1236.5" y2="606.1" stroke="#e2e2e2" stroke-width="1" stroke-dasharray="4 2"/><line x1="1325.5" y1="453" x2="1325.5" y2="606.1" stroke="#e2e2e2" stroke-width="1" stroke-dasharray="4 2"/><line x1="1414.5" y1="453" x2="1414.5" y2="606.1" stroke="#e2e2e2" stroke-width="1" stroke-dasharray="4 2"/><line x1="1504.5" y1="453" x2="1504.5" y2="606.1" stroke="#e2e2e2" stroke-width="1" stroke-dasharray="4 2"/><line x1="1593.5" y1="453" x2="1593.5" y2="606.1" stroke="#e2e2e2" stroke-width="1" stroke-dasharray="4 2"/><line x1="1682.5" y1="453" x2="1682.5" y2="606.1" stroke="#e2e2e2" stroke-width="1" stroke-dasharray="4 2"/><line x1="1771.5" y1="453" x2="1771.5" y2="606.1" stroke="#e2e2e2" stroke-width="1" stroke-dasharray="4 2"/><line x1="1860.5" y1="453" x2="1860.5" y2="606.1" stroke="#e2e2e2" stroke-width="1" stroke-dasharray="4 2"/><line x1="1864.5" y1="453" x2="1864.5" y2="606.1" stroke="#e2e2e2" stroke-width="1" stroke-dasharray="4 2"/><line x1="1869.5" y1="453" x2="1869.5" y2="606.1" stroke="#e2e2e2" stroke-width="1" stroke-dasharray="4 2"/><line x1="1147.5" y1="606.5" x2="1869.5" y2="606.5" stroke="#2f3d5c" stroke-width="1"/><line x1="1147.5" y1="606.5" x2="1147.5" y2="611.5" stroke="#2f3d5c" stroke-width="1"/><line x1="1236.5" y1="606.5" x2="1236.5" y2="611.5" stroke="#2f3d5c" stroke-width="1"/><line x1="1325.5" y1="606.5" x2="1325.5" y2="611.5" stroke="#2f3d5c" stroke-width="1"/><line x1="1414.5" y1="606.5" x2="1414.5" y2="611.5" stroke="#2f3d5c" stroke-width="1"/><line x1="1504.5" y1="606.5" x2="1504.5" y2="611.5" stroke="#2f3d5c" stroke-width="1"/><line x1="1593.5" y1="606.5" x2="1593.5" y2="611.5" stroke="#2f3d5c" stroke-width="1"/><line x1="1682.5" y1="606.5" x2="1682.5" y2="611.5" stroke="#2f3d5c" stroke-width="1"/><line x1="1771.5" y1="606.5" x2="1771.5" y2="611.5" stroke="#2f3d5c" stroke-width="1"/><line x1="1860.5" y1="606.5" x2="1860.5" y2="611.5" stroke="#2f3d5c" stroke-width="1"/><line x1="1864.5" y1="606.5" x2="1864.5" y2="611.5" stroke="#2f3d5c" stroke-width="1"/><line x1="1869.5" y1="606.5" x2="1869.5" y2="611.5" stroke="#2f3d5c" stroke-width="1"/><text x="1149.0" y="623" text-anchor="middle" font-size="12" fill="#555" letter-spacing="0.35">03-12 00:00</text><text x="1238.14" y="623" text-anchor="middle" font-size="12" fill="#555" letter-spacing="0.35">03-12 01:40</text><text x="1327.28" y="623" text-anchor="middle" font-size="12" fill="#555" letter-spacing="0.35">03-12 03:20</text><text x="1416.42" y="623" text-anchor="middle" font-size="12" fill="#555" letter-spacing="0.35">03-12 05:00</text><text x="1505.56" y="623" text-anchor="middle" font-size="12" fill="#555" letter-spacing="0.35">03-12 06:40</text><text x="1594.7" y="623" text-anchor="middle" font-size="12" fill="#555" letter-spacing="0.35">03-12 08:20</text><text x="1683.8400000000001" y="623" text-anchor="middle" font-size="12" fill="#555" letter-spacing="0.35">03-12 10:00</text><text x="1772.98" y="623" text-anchor="middle" font-size="12" fill="#555" letter-spacing="0.35">03-12 11:40</text><text x="1866.5" y="623" text-anchor="middle" font-size="12" fill="#555" letter-spacing="0.35">03-12 13:25</text><text x="1147" y="436" text-anchor="middle" font-size="12" fill="#555">%</text><path d="M1148.40 606.10 C1148.40 606.10 1151.69 606.10 1152.86 606.10 C1156.15 606.10 1154.03 594.37 1157.31 594.37 C1158.48 594.37 1160.60 594.37 1161.77 594.37 C1165.06 594.37 1164.00 588.50 1166.23 582.64 C1168.46 576.77 1168.46 576.78 1170.69 570.91 C1172.91 565.05 1172.91 565.05 1175.14 559.18 C1177.37 553.32 1176.31 547.45 1179.60 547.45 C1180.77 547.45 1182.89 547.45 1184.06 547.45 C1187.34 547.45 1186.28 541.59 1188.51 535.72 C1190.74 529.86 1190.74 529.86 1192.97 523.99 C1195.20 518.12 1194.14 512.26 1197.43 512.26 C1198.60 512.26 1200.72 512.26 1201.88 512.26 C1205.17 512.26 1204.11 506.40 1206.34 500.53 C1208.57 494.67 1208.57 494.67 1210.80 488.80 C1213.03 482.94 1211.97 477.07 1215.26 477.07 C1216.42 477.07 1218.54 477.07 1219.71 477.07 C1223.00 477.07 1220.88 465.34 1224.17 465.34 C1225.34 465.34 1227.46 465.34 1228.63 465.34 C1231.91 465.34 1229.79 453.61 1233.08 453.61 C1234.25 453.61 1235.31 453.61 1237.54 453.61 C1239.77 453.61 1239.77 453.61 1242.00 453.61 C1244.23 453.61 1244.23 453.61 1246.45 453.61 C1248.68 453.61 1248.68 453.61 1250.91 453.61 C1253.14 453.61 1253.14 453.61 1255.37 453.61 C1257.60 453.61 1257.60 453.61 1259.83 453.61 C1262.05 453.61 1262.05 453.61 1264.28 453.61 C1266.51 453.61 1266.51 453.61 1268.74 453.61 C1270.97 453.61 1270.97 453.61 1273.20 453.61 C1275.42 453.61 1275.42 453.61 1277.65 453.61 C1279.88 453.61 1279.88 453.61 1282.11 453.61 C1284.34 453.61 1284.34 453.61 1286.57 453.61 C1288.80 453.61 1288.80 453.61 1291.02 453.61 C1293.25 453.61 1293.25 453.61 1295.48 453.61 C1297.71 453.61 1297.71 453.61 1299.94 453.61 C1302.17 453.61 1302.17 453.61 1304.39 453.61 C1306.62 453.61 1306.62 453.61 1308.85 453.61 C1311.08 453.61 1311.08 453.61 1313.31 453.61 C1315.54 453.61 1315.54 453.61 1317.77 453.61 C1319.99 453.61 1319.99 453.61 1322.22 453.61 C1324.45 453.61 1324.45 453.61 1326.68 453.61 C1328.91 453.61 1328.91 453.61 1331.14 453.61 C1333.37 453.61 1333.37 453.61 1335.59 453.61 C1337.82 453.61 1337.82 453.61 1340.05 453.61 C1342.28 453.61 1342.28 453.61 1344.51 453.61 C1346.74 453.61 1346.74 453.61 1348.97 453.61 C1351.19 453.61 1351.19 453.61 1353.42 453.61 C1355.65 453.61 1355.65 453.61 1357.88 453.61 C1360.11 453.61 1360.11 453.61 1362.34 453.61 C1364.56 453.61 1364.56 453.61 1366.79 453.61 C1369.02 453.61 1369.02 453.61 1371.25 453.61 C1373.48 453.61 1373.48 453.61 1375.71 453.61 C1377.94 453.61 1377.94 453.61 1380.16 453.61 C1382.39 453.61 1382.39 453.61 1384.62 453.61 C1386.85 453.61 1386.85 453.61 1389.08 453.61 C1391.31 453.61 1391.31 453.61 1393.54 453.61 C1395.76 453.61 1395.76 453.61 1397.99 453.61 C1400.22 453.61 1400.22 453.61 1402.45 453.61 C1404.68 453.61 1404.68 453.61 1406.91 453.61 C1409.13 453.61 1409.13 453.61 1411.36 453.61 C1413.59 453.61 1413.59 453.61 1415.82 453.61 C1418.05 453.61 1418.05 453.61 1420.28 453.61 C1422.51 453.61 1422.51 453.61 1424.73 453.61 C1426.96 453.61 1426.96 453.61 1429.19 453.61 C1431.42 453.61 1431.42 453.61 1433.65 453.61 C1435.88 453.61 1435.88 453.61 1438.11 453.61 C1440.33 453.61 1440.33 453.61 1442.56 453.61 C1444.79 453.61 1444.79 453.61 1447.02 453.61 C1449.25 453.61 1449.25 453.61 1451.48 453.61 C1453.70 453.61 1453.70 453.61 1455.93 453.61 C1458.16 453.61 1458.16 453.61 1460.39 453.61 C1462.62 453.61 1462.62 453.61 1464.85 453.61 C1467.08 453.61 1467.08 453.61 1469.30 453.61 C1471.53 453.61 1471.53 453.61 1473.76 453.61 C1475.99 453.61 1475.99 453.61 1478.22 453.61 C1480.45 453.61 1480.45 453.61 1482.68 453.61 C1484.90 453.61 1484.90 453.61 1487.13 453.61 C1489.36 453.61 1489.36 453.61 1491.59 453.61 C1493.82 453.61 1493.82 453.61 1496.05 453.61 C1498.27 453.61 1498.27 453.61 1500.50 453.61 C1502.73 453.61 1502.73 453.61 1504.96 453.61 C1507.19 453.61 1507.19 453.61 1509.42 453.61 C1511.65 453.61 1511.65 453.61 1513.87 453.61 C1516.10 453.61 1516.10 453.61 1518.33 453.61 C1520.56 453.61 1520.56 453.61 1522.79 453.61 C1525.02 453.61 1525.02 453.61 1527.25 453.61 C1529.47 453.61 1529.47 453.61 1531.70 453.61 C1533.93 453.61 1533.93 453.61 1536.16 453.61 C1538.39 453.61 1538.39 453.61 1540.62 453.61 C1542.84 453.61 1542.84 453.61 1545.07 453.61 C1547.30 453.61 1547.30 453.61 1549.53 453.61 C1551.76 453.61 1551.76 453.61 1553.99 453.61 C1556.22 453.61 1556.22 453.61 1558.44 453.61 C1560.67 453.61 1560.67 453.61 1562.90 453.61 C1565.13 453.61 1565.13 453.61 1567.36 453.61 C1569.59 453.61 1569.59 453.61 1571.82 453.61 C1574.04 453.61 1574.04 453.61 1576.27 453.61 C1578.50 453.61 1578.50 453.61 1580.73 453.61 C1582.96 453.61 1582.96 453.61 1585.19 453.61 C1587.41 453.61 1587.41 453.61 1589.64 453.61 C1591.87 453.61 1591.87 453.61 1594.10 453.61 C1596.33 453.61 1596.33 453.61 1598.56 453.61 C1600.79 453.61 1600.79 453.61 1603.01 453.61 C1605.24 453.61 1605.24 453.61 1607.47 453.61 C1609.70 453.61 1609.70 453.61 1611.93 453.61 C1614.16 453.61 1614.16 453.61 1616.38 453.61 C1618.61 453.61 1618.61 453.61 1620.84 453.61 C1623.07 453.61 1623.07 453.61 1625.30 453.61 C1627.53 453.61 1627.53 453.61 1629.76 453.61 C1631.98 453.61 1631.98 453.61 1634.21 453.61 C1636.44 453.61 1636.44 453.61 1638.67 453.61 C1640.90 453.61 1640.90 453.61 1643.13 453.61 C1645.36 453.61 1645.36 453.61 1647.58 453.61 C1649.81 453.61 1649.81 453.61 1652.04 453.61 C1654.27 453.61 1654.27 453.61 1656.50 453.61 C1658.73 453.61 1658.73 453.61 1660.95 453.61 C1663.18 453.61 1663.18 453.61 1665.41 453.61 C1667.64 453.61 1667.64 453.61 1669.87 453.61 C1672.10 453.61 1672.10 453.61 1674.33 453.61 C1676.55 453.61 1676.55 453.61 1678.78 453.61 C1681.01 453.61 1681.01 453.61 1683.24 453.61 C1685.47 453.61 1685.47 453.61 1687.70 453.61 C1689.93 453.61 1689.93 453.61 1692.15 453.61 C1694.38 453.61 1694.38 453.61 1696.61 453.61 C1698.84 453.61 1698.84 453.61 1701.07 453.61 C1703.30 453.61 1703.30 453.61 1705.53 453.61 C1707.75 453.61 1707.75 453.61 1709.98 453.61 C1712.21 453.61 1712.21 453.61 1714.44 453.61 C1716.67 453.61 1716.67 453.61 1718.90 453.61 C1721.12 453.61 1721.12 453.61 1723.35 453.61 C1725.58 453.61 1725.58 453.61 1727.81 453.61 C1730.04 453.61 1730.04 453.61 1732.27 453.61 C1734.50 453.61 1734.50 453.61 1736.72 453.61 C1738.95 453.61 1741.18 453.61 1741.18 453.61" stroke="#2fc5c6" stroke-width="2" fill="none" stroke-linejoin="round"/><path d="M1812.49 453.61 C1812.49 453.61 1814.72 453.61 1816.95 453.61 C1819.18 453.61 1819.18 453.61 1821.41 453.61 C1823.64 453.61 1823.64 453.61 1825.86 453.61 C1828.09 453.61 1828.09 453.61 1830.32 453.61 C1832.55 453.61 1832.55 453.61 1834.78 453.61 C1837.01 453.61 1837.01 453.61 1839.24 453.61 C1841.46 453.61 1841.46 453.61 1843.69 453.61 C1845.92 453.61 1846.98 453.61 1848.15 453.61 C1851.44 453.61 1849.32 465.34 1852.61 465.34 C1853.77 465.34 1855.89 465.34 1857.06 465.34 C1860.35 465.34 1858.23 477.07 1861.52 477.07 C1862.69 477.07 1865.98 477.07 1865.98 477.07" stroke="#2fc5c6" stroke-width="2" fill="none" stroke-linejoin="round"/><line x1="1470.8" y1="634.3" x2="1495.8" y2="634.3" stroke="#2fc5c6" stroke-width="2"/><circle cx="1483.3" cy="634.3" r="5.3" fill="#2fc5c6"/><text x="1501.8" y="638.0999999999999" text-anchor="start" font-size="12" fill="#444">SOC</text><line x1="1150.5" y1="725.5" x2="1846.5" y2="725.5" stroke="#e2e2e2" stroke-width="1" stroke-dasharray="4 2"/><line x1="1150.5" y1="748.5" x2="1846.5" y2="748.5" stroke="#e2e2e2" stroke-width="1" stroke-dasharray="4 2"/><line x1="1150.5" y1="778.5" x2="1846.5" y2="778.5" stroke="#e2e2e2" stroke-width="1" stroke-dasharray="4 2"/><line x1="1150.5" y1="807.5" x2="1846.5" y2="807.5" stroke="#e2e2e2" stroke-width="1" stroke-dasharray="4 2"/><line x1="1150.5" y1="837.5" x2="1846.5" y2="837.5" stroke="#e2e2e2" stroke-width="1" stroke-dasharray="4 2"/><line x1="1150.5" y1="866.5" x2="1846.5" y2="866.5" stroke="#e2e2e2" stroke-width="1" stroke-dasharray="4 2"/><line x1="1150.5" y1="746.5" x2="1846.5" y2="746.5" stroke="#e2e2e2" stroke-width="1" stroke-dasharray="4 2"/><line x1="1150.5" y1="776.5" x2="1846.5" y2="776.5" stroke="#e2e2e2" stroke-width="1" stroke-dasharray="4 2"/><line x1="1150.5" y1="807.5" x2="1846.5" y2="807.5" stroke="#e2e2e2" stroke-width="1" stroke-dasharray="4 2"/><line x1="1150.5" y1="837.5" x2="1846.5" y2="837.5" stroke="#e2e2e2" stroke-width="1" stroke-dasharray="4 2"/><line x1="1150.5" y1="868.5" x2="1846.5" y2="868.5" stroke="#e2e2e2" stroke-width="1" stroke-dasharray="4 2"/><text x="1142" y="729.1020000000002" text-anchor="end" font-size="12" fill="#555">3.59</text><text x="1142" y="752.5940000000002" text-anchor="end" font-size="12" fill="#555">3.55</text><text x="1142" y="781.9590000000002" text-anchor="end" font-size="12" fill="#555">3.5</text><text x="1142" y="811.324" text-anchor="end" font-size="12" fill="#555">3.45</text><text x="1142" y="840.6890000000002" text-anchor="end" font-size="12" fill="#555">3.4</text><text x="1142" y="870.0540000000001" text-anchor="end" font-size="12" fill="#555">3.35</text><text x="1855" y="729.7" text-anchor="start" font-size="12" fill="#555">32</text><text x="1855" y="749.9800000000001" text-anchor="start" font-size="12" fill="#555">30</text><text x="1855" y="780.4000000000001" text-anchor="start" font-size="12" fill="#555">27</text><text x="1855" y="810.82" text-anchor="start" font-size="12" fill="#555">24</text><text x="1855" y="841.2400000000001" text-anchor="start" font-size="12" fill="#555">21</text><text x="1855" y="871.6600000000001" text-anchor="start" font-size="12" fill="#555">18</text><line x1="1150.5" y1="725.5" x2="1150.5" y2="878.2" stroke="#e2e2e2" stroke-width="1" stroke-dasharray="4 2"/><line x1="1240.5" y1="725.5" x2="1240.5" y2="878.2" stroke="#e2e2e2" stroke-width="1" stroke-dasharray="4 2"/><line x1="1331.5" y1="725.5" x2="1331.5" y2="878.2" stroke="#e2e2e2" stroke-width="1" stroke-dasharray="4 2"/><line x1="1421.5" y1="725.5" x2="1421.5" y2="878.2" stroke="#e2e2e2" stroke-width="1" stroke-dasharray="4 2"/><line x1="1512.5" y1="725.5" x2="1512.5" y2="878.2" stroke="#e2e2e2" stroke-width="1" stroke-dasharray="4 2"/><line x1="1602.5" y1="725.5" x2="1602.5" y2="878.2" stroke="#e2e2e2" stroke-width="1" stroke-dasharray="4 2"/><line x1="1692.5" y1="725.5" x2="1692.5" y2="878.2" stroke="#e2e2e2" stroke-width="1" stroke-dasharray="4 2"/><line x1="1783.5" y1="725.5" x2="1783.5" y2="878.2" stroke="#e2e2e2" stroke-width="1" stroke-dasharray="4 2"/><line x1="1842.5" y1="725.5" x2="1842.5" y2="878.2" stroke="#e2e2e2" stroke-width="1" stroke-dasharray="4 2"/><line x1="1846.5" y1="725.5" x2="1846.5" y2="878.2" stroke="#e2e2e2" stroke-width="1" stroke-dasharray="4 2"/><line x1="1150.5" y1="878.5" x2="1846.5" y2="878.5" stroke="#2f3d5c" stroke-width="1"/><line x1="1150.5" y1="878.5" x2="1150.5" y2="883.5" stroke="#2f3d5c" stroke-width="1"/><line x1="1240.5" y1="878.5" x2="1240.5" y2="883.5" stroke="#2f3d5c" stroke-width="1"/><line x1="1331.5" y1="878.5" x2="1331.5" y2="883.5" stroke="#2f3d5c" stroke-width="1"/><line x1="1421.5" y1="878.5" x2="1421.5" y2="883.5" stroke="#2f3d5c" stroke-width="1"/><line x1="1512.5" y1="878.5" x2="1512.5" y2="883.5" stroke="#2f3d5c" stroke-width="1"/><line x1="1602.5" y1="878.5" x2="1602.5" y2="883.5" stroke="#2f3d5c" stroke-width="1"/><line x1="1692.5" y1="878.5" x2="1692.5" y2="883.5" stroke="#2f3d5c" stroke-width="1"/><line x1="1783.5" y1="878.5" x2="1783.5" y2="883.5" stroke="#2f3d5c" stroke-width="1"/><line x1="1842.5" y1="878.5" x2="1842.5" y2="883.5" stroke="#2f3d5c" stroke-width="1"/><line x1="1846.5" y1="878.5" x2="1846.5" y2="883.5" stroke="#2f3d5c" stroke-width="1"/><text x="1152.5" y="895" text-anchor="middle" font-size="12" fill="#555" letter-spacing="0.35">03-12 00:00</text><text x="1242.905" y="895" text-anchor="middle" font-size="12" fill="#555" letter-spacing="0.35">03-12 01:45</text><text x="1333.31" y="895" text-anchor="middle" font-size="12" fill="#555" letter-spacing="0.35">03-12 03:30</text><text x="1423.7150000000001" y="895" text-anchor="middle" font-size="12" fill="#555" letter-spacing="0.35">03-12 05:15</text><text x="1514.12" y="895" text-anchor="middle" font-size="12" fill="#555" letter-spacing="0.35">03-12 07:00</text><text x="1604.525" y="895" text-anchor="middle" font-size="12" fill="#555" letter-spacing="0.35">03-12 08:45</text><text x="1694.93" y="895" text-anchor="middle" font-size="12" fill="#555" letter-spacing="0.35">03-12 10:30</text><text x="1844.3" y="895" text-anchor="middle" font-size="12" fill="#555" letter-spacing="0.35">03-12 13:25</text><text x="1150" y="708" text-anchor="middle" font-size="12" fill="#555">V</text><path d="M1151.60 878.20 C1151.60 878.20 1152.24 837.09 1155.90 837.09 C1156.55 837.09 1159.88 842.96 1160.21 842.96 C1164.19 842.96 1162.43 754.87 1164.51 754.87 C1166.74 754.87 1164.70 848.84 1168.82 848.84 C1169.01 848.84 1172.95 848.84 1173.12 848.84 C1177.25 848.84 1173.30 748.99 1177.43 748.99 C1177.61 748.99 1179.58 748.99 1181.73 748.99 C1183.89 748.99 1185.63 748.99 1186.04 748.99 C1189.94 748.99 1187.04 790.11 1190.34 790.11 C1191.35 790.11 1193.95 778.36 1194.65 778.36 C1198.26 778.36 1197.20 842.96 1198.95 842.96 C1201.50 842.96 1199.46 748.99 1203.26 748.99 C1203.77 748.99 1206.81 754.57 1207.56 760.74 C1211.12 789.80 1209.01 819.47 1211.87 819.47 C1213.31 819.47 1214.02 804.79 1216.17 790.11 C1218.33 775.42 1218.52 775.45 1220.48 760.74 C1222.82 743.15 1220.95 725.50 1224.78 725.50 C1225.25 725.50 1228.84 725.50 1229.09 725.50 C1233.15 725.50 1229.34 795.98 1233.39 795.98 C1233.64 795.98 1235.55 795.98 1237.70 795.98 C1239.85 795.98 1240.41 795.98 1242.00 795.98 C1244.71 795.98 1243.60 801.85 1246.31 801.85 C1247.91 801.85 1249.02 801.85 1250.61 801.85 C1253.32 801.85 1252.21 807.72 1254.92 807.72 C1256.52 807.72 1257.07 807.72 1259.22 807.72 C1261.38 807.72 1261.38 807.72 1263.53 807.72 C1265.68 807.72 1265.68 807.72 1267.83 807.72 C1269.99 807.72 1269.99 807.72 1272.14 807.72 C1274.29 807.72 1274.29 807.72 1276.44 807.72 C1278.60 807.72 1278.60 807.72 1280.75 807.72 C1282.90 807.72 1282.90 807.72 1285.05 807.72 C1287.21 807.72 1287.21 807.72 1289.36 807.72 C1291.51 807.72 1291.51 807.72 1293.66 807.72 C1295.82 807.72 1295.82 807.72 1297.97 807.72 C1300.12 807.72 1300.12 807.72 1302.27 807.72 C1304.43 807.72 1304.98 807.72 1306.58 807.72 C1309.29 807.72 1308.73 813.60 1310.88 813.60 C1313.04 813.60 1312.48 807.72 1315.19 807.72 C1316.79 807.72 1317.90 807.72 1319.49 807.72 C1322.20 807.72 1321.09 813.60 1323.80 813.60 C1325.40 813.60 1325.95 813.60 1328.11 813.60 C1330.26 813.60 1330.26 813.60 1332.41 813.60 C1334.56 813.60 1334.56 813.60 1336.71 813.60 C1338.87 813.60 1338.87 813.60 1341.02 813.60 C1343.17 813.60 1343.17 813.60 1345.32 813.60 C1347.48 813.60 1348.03 813.60 1349.63 813.60 C1352.34 813.60 1351.78 807.72 1353.93 807.72 C1356.09 807.72 1355.53 813.60 1358.24 813.60 C1359.84 813.60 1360.39 813.60 1362.54 813.60 C1364.70 813.60 1364.70 813.60 1366.85 813.60 C1369.00 813.60 1369.00 813.60 1371.15 813.60 C1373.31 813.60 1373.31 813.60 1375.46 813.60 C1377.61 813.60 1377.61 813.60 1379.76 813.60 C1381.92 813.60 1381.92 813.60 1384.07 813.60 C1386.22 813.60 1386.22 813.60 1388.38 813.60 C1390.53 813.60 1390.53 813.60 1392.68 813.60 C1394.83 813.60 1394.83 813.60 1396.98 813.60 C1399.14 813.60 1399.14 813.60 1401.29 813.60 C1403.44 813.60 1403.44 813.60 1405.59 813.60 C1407.75 813.60 1407.75 813.60 1409.90 813.60 C1412.05 813.60 1412.05 813.60 1414.20 813.60 C1416.36 813.60 1416.36 813.60 1418.51 813.60 C1420.66 813.60 1420.66 813.60 1422.81 813.60 C1424.97 813.60 1424.97 813.60 1427.12 813.60 C1429.27 813.60 1429.27 813.60 1431.42 813.60 C1433.58 813.60 1433.58 813.60 1435.73 813.60 C1437.88 813.60 1437.88 813.60 1440.03 813.60 C1442.19 813.60 1442.19 813.60 1444.34 813.60 C1446.49 813.60 1446.49 813.60 1448.64 813.60 C1450.80 813.60 1450.80 813.60 1452.95 813.60 C1455.10 813.60 1455.10 813.60 1457.25 813.60 C1459.41 813.60 1459.41 813.60 1461.56 813.60 C1463.71 813.60 1463.71 813.60 1465.86 813.60 C1468.02 813.60 1468.02 813.60 1470.17 813.60 C1472.32 813.60 1472.32 813.60 1474.47 813.60 C1476.63 813.60 1476.63 813.60 1478.78 813.60 C1480.93 813.60 1480.93 813.60 1483.08 813.60 C1485.24 813.60 1485.24 813.60 1487.39 813.60 C1489.54 813.60 1489.54 813.60 1491.69 813.60 C1493.85 813.60 1493.85 813.60 1496.00 813.60 C1498.15 813.60 1498.15 813.60 1500.30 813.60 C1502.46 813.60 1502.46 813.60 1504.61 813.60 C1506.76 813.60 1506.76 813.60 1508.91 813.60 C1511.07 813.60 1511.07 813.60 1513.22 813.60 C1515.37 813.60 1515.37 813.60 1517.52 813.60 C1519.68 813.60 1519.68 813.60 1521.83 813.60 C1523.98 813.60 1523.98 813.60 1526.13 813.60 C1528.29 813.60 1528.29 813.60 1530.44 813.60 C1532.59 813.60 1532.59 813.60 1534.74 813.60 C1536.90 813.60 1536.90 813.60 1539.05 813.60 C1541.20 813.60 1541.20 813.60 1543.36 813.60 C1545.51 813.60 1545.51 813.60 1547.66 813.60 C1549.81 813.60 1549.81 813.60 1551.96 813.60 C1554.12 813.60 1554.12 813.60 1556.27 813.60 C1558.42 813.60 1558.42 813.60 1560.57 813.60 C1562.73 813.60 1562.73 813.60 1564.88 813.60 C1567.03 813.60 1567.03 813.60 1569.18 813.60 C1571.34 813.60 1571.34 813.60 1573.49 813.60 C1575.64 813.60 1575.64 813.60 1577.79 813.60 C1579.95 813.60 1579.95 813.60 1582.10 813.60 C1584.25 813.60 1584.25 813.60 1586.40 813.60 C1588.56 813.60 1588.56 813.60 1590.71 813.60 C1592.86 813.60 1592.86 813.60 1595.01 813.60 C1597.17 813.60 1597.17 813.60 1599.32 813.60 C1601.47 813.60 1601.47 813.60 1603.62 813.60 C1605.78 813.60 1605.78 813.60 1607.93 813.60 C1610.08 813.60 1610.08 813.60 1612.23 813.60 C1614.39 813.60 1614.39 813.60 1616.54 813.60 C1618.69 813.60 1618.69 813.60 1620.84 813.60 C1623.00 813.60 1623.00 813.60 1625.15 813.60 C1627.30 813.60 1627.30 813.60 1629.45 813.60 C1631.61 813.60 1631.61 813.60 1633.76 813.60 C1635.91 813.60 1635.91 813.60 1638.06 813.60 C1640.22 813.60 1640.22 813.60 1642.37 813.60 C1644.52 813.60 1644.52 813.60 1646.67 813.60 C1648.83 813.60 1648.83 813.60 1650.98 813.60 C1653.13 813.60 1653.13 813.60 1655.28 813.60 C1657.44 813.60 1657.44 813.60 1659.59 813.60 C1661.74 813.60 1661.74 813.60 1663.89 813.60 C1666.05 813.60 1666.05 813.60 1668.20 813.60 C1670.35 813.60 1670.35 813.60 1672.50 813.60 C1674.66 813.60 1674.66 813.60 1676.81 813.60 C1678.96 813.60 1678.96 813.60 1681.11 813.60 C1683.27 813.60 1683.27 813.60 1685.42 813.60 C1687.57 813.60 1687.57 813.60 1689.72 813.60 C1691.88 813.60 1691.88 813.60 1694.03 813.60 C1696.18 813.60 1696.18 813.60 1698.34 813.60 C1700.49 813.60 1700.49 813.60 1702.64 813.60 C1704.79 813.60 1704.79 813.60 1706.94 813.60 C1709.10 813.60 1709.10 813.60 1711.25 813.60 C1713.40 813.60 1713.40 813.60 1715.55 813.60 C1717.71 813.60 1717.71 813.60 1719.86 813.60 C1722.01 813.60 1724.16 813.60 1724.16 813.60" stroke="#1ebdb9" stroke-width="2" fill="none" stroke-linejoin="round"/><path d="M1793.04 813.60 C1793.04 813.60 1795.20 813.60 1797.35 813.60 C1799.50 813.60 1799.50 813.60 1801.65 813.60 C1803.81 813.60 1803.81 813.60 1805.96 813.60 C1808.11 813.60 1808.11 813.60 1810.26 813.60 C1812.42 813.60 1812.42 813.60 1814.57 813.60 C1816.72 813.60 1816.72 813.60 1818.88 813.60 C1821.03 813.60 1822.82 813.60 1823.18 813.60 C1827.13 813.60 1825.19 766.61 1827.48 766.61 C1829.50 766.61 1829.78 787.15 1831.79 807.72 C1834.08 831.20 1834.45 854.71 1836.09 854.71 C1838.76 854.71 1836.70 778.36 1840.40 778.36 C1841.01 778.36 1844.70 790.11 1844.70 790.11" stroke="#1ebdb9" stroke-width="2" fill="none" stroke-linejoin="round"/><path d="M1151.60 837.64 C1151.60 837.64 1153.33 807.22 1155.90 807.22 C1157.64 807.22 1159.12 827.50 1160.21 827.50 C1163.42 827.50 1162.53 766.66 1164.51 766.66 C1166.83 766.66 1164.76 837.64 1168.82 837.64 C1169.07 837.64 1170.97 837.64 1173.12 837.64 C1175.28 837.64 1177.24 837.64 1177.43 837.64 C1181.54 837.64 1178.97 746.38 1181.73 746.38 C1183.27 746.38 1182.07 797.08 1186.04 797.08 C1186.38 797.08 1188.19 797.08 1190.34 797.08 C1192.50 797.08 1194.12 797.08 1194.65 797.08 C1198.43 797.08 1197.87 827.50 1198.95 827.50 C1202.18 827.50 1200.84 736.24 1203.26 736.24 C1205.14 736.24 1204.23 807.22 1207.56 807.22 C1208.54 807.22 1209.29 786.94 1211.87 786.94 C1213.60 786.94 1214.29 793.45 1216.17 800.12 C1218.59 808.66 1219.28 817.36 1220.48 817.36 C1223.58 817.36 1222.63 794.55 1224.78 771.73 C1226.94 748.91 1227.84 726.10 1229.09 726.10 C1232.14 726.10 1229.25 837.64 1233.39 837.64 C1233.55 837.64 1235.55 837.64 1237.70 837.64 C1239.85 837.64 1239.85 837.64 1242.00 837.64 C1244.16 837.64 1245.10 837.64 1246.31 837.64 C1249.41 837.64 1247.52 847.78 1250.61 847.78 C1251.82 847.78 1252.77 847.78 1254.92 847.78 C1257.07 847.78 1257.07 847.78 1259.22 847.78 C1261.38 847.78 1261.38 847.78 1263.53 847.78 C1265.68 847.78 1265.68 847.78 1267.83 847.78 C1269.99 847.78 1269.99 847.78 1272.14 847.78 C1274.29 847.78 1274.29 847.78 1276.44 847.78 C1278.60 847.78 1278.60 847.78 1280.75 847.78 C1282.90 847.78 1282.90 847.78 1285.05 847.78 C1287.21 847.78 1287.21 847.78 1289.36 847.78 C1291.51 847.78 1291.51 847.78 1293.66 847.78 C1295.82 847.78 1295.82 847.78 1297.97 847.78 C1300.12 847.78 1300.12 847.78 1302.27 847.78 C1304.43 847.78 1304.43 847.78 1306.58 847.78 C1308.73 847.78 1308.73 847.78 1310.88 847.78 C1313.04 847.78 1313.04 847.78 1315.19 847.78 C1317.34 847.78 1317.34 847.78 1319.49 847.78 C1321.65 847.78 1321.65 847.78 1323.80 847.78 C1325.95 847.78 1326.90 847.78 1328.11 847.78 C1331.20 847.78 1329.31 857.92 1332.41 857.92 C1333.62 857.92 1334.56 857.92 1336.71 857.92 C1338.87 857.92 1338.87 857.92 1341.02 857.92 C1343.17 857.92 1343.17 857.92 1345.32 857.92 C1347.48 857.92 1347.48 857.92 1349.63 857.92 C1351.78 857.92 1351.78 857.92 1353.93 857.92 C1356.09 857.92 1356.09 857.92 1358.24 857.92 C1360.39 857.92 1360.39 857.92 1362.54 857.92 C1364.70 857.92 1364.70 857.92 1366.85 857.92 C1369.00 857.92 1369.00 857.92 1371.15 857.92 C1373.31 857.92 1373.31 857.92 1375.46 857.92 C1377.61 857.92 1377.61 857.92 1379.76 857.92 C1381.92 857.92 1381.92 857.92 1384.07 857.92 C1386.22 857.92 1386.22 857.92 1388.38 857.92 C1390.53 857.92 1390.53 857.92 1392.68 857.92 C1394.83 857.92 1394.83 857.92 1396.98 857.92 C1399.14 857.92 1399.14 857.92 1401.29 857.92 C1403.44 857.92 1403.44 857.92 1405.59 857.92 C1407.75 857.92 1407.75 857.92 1409.90 857.92 C1412.05 857.92 1412.05 857.92 1414.20 857.92 C1416.36 857.92 1416.36 857.92 1418.51 857.92 C1420.66 857.92 1421.61 857.92 1422.81 857.92 C1425.91 857.92 1424.02 868.06 1427.12 868.06 C1428.33 868.06 1429.27 868.06 1431.42 868.06 C1433.58 868.06 1433.58 868.06 1435.73 868.06 C1437.88 868.06 1437.88 868.06 1440.03 868.06 C1442.19 868.06 1442.19 868.06 1444.34 868.06 C1446.49 868.06 1446.49 868.06 1448.64 868.06 C1450.80 868.06 1450.80 868.06 1452.95 868.06 C1455.10 868.06 1455.10 868.06 1457.25 868.06 C1459.41 868.06 1459.41 868.06 1461.56 868.06 C1463.71 868.06 1463.71 868.06 1465.86 868.06 C1468.02 868.06 1468.02 868.06 1470.17 868.06 C1472.32 868.06 1472.32 868.06 1474.47 868.06 C1476.63 868.06 1476.63 868.06 1478.78 868.06 C1480.93 868.06 1480.93 868.06 1483.08 868.06 C1485.24 868.06 1485.24 868.06 1487.39 868.06 C1489.54 868.06 1489.54 868.06 1491.69 868.06 C1493.85 868.06 1493.85 868.06 1496.00 868.06 C1498.15 868.06 1498.15 868.06 1500.30 868.06 C1502.46 868.06 1502.46 868.06 1504.61 868.06 C1506.76 868.06 1506.76 868.06 1508.91 868.06 C1511.07 868.06 1511.07 868.06 1513.22 868.06 C1515.37 868.06 1516.32 868.06 1517.52 868.06 C1520.62 868.06 1519.68 878.20 1521.83 878.20 C1523.98 878.20 1523.98 868.06 1526.13 868.06 C1528.29 868.06 1527.34 878.20 1530.44 878.20 C1531.65 878.20 1532.59 878.20 1534.74 878.20 C1536.90 878.20 1536.90 878.20 1539.05 878.20 C1541.20 878.20 1541.20 878.20 1543.36 878.20 C1545.51 878.20 1545.51 878.20 1547.66 878.20 C1549.81 878.20 1549.81 878.20 1551.96 878.20 C1554.12 878.20 1554.12 878.20 1556.27 878.20 C1558.42 878.20 1558.42 878.20 1560.57 878.20 C1562.73 878.20 1562.73 878.20 1564.88 878.20 C1567.03 878.20 1567.03 878.20 1569.18 878.20 C1571.34 878.20 1571.34 878.20 1573.49 878.20 C1575.64 878.20 1575.64 878.20 1577.79 878.20 C1579.95 878.20 1579.95 878.20 1582.10 878.20 C1584.25 878.20 1584.25 878.20 1586.40 878.20 C1588.56 878.20 1588.56 878.20 1590.71 878.20 C1592.86 878.20 1592.86 878.20 1595.01 878.20 C1597.17 878.20 1597.17 878.20 1599.32 878.20 C1601.47 878.20 1601.47 878.20 1603.62 878.20 C1605.78 878.20 1605.78 878.20 1607.93 878.20 C1610.08 878.20 1610.08 878.20 1612.23 878.20 C1614.39 878.20 1614.39 878.20 1616.54 878.20 C1618.69 878.20 1618.69 878.20 1620.84 878.20 C1623.00 878.20 1623.00 878.20 1625.15 878.20 C1627.30 878.20 1627.30 878.20 1629.45 878.20 C1631.61 878.20 1631.61 878.20 1633.76 878.20 C1635.91 878.20 1635.91 878.20 1638.06 878.20 C1640.22 878.20 1640.22 878.20 1642.37 878.20 C1644.52 878.20 1644.52 878.20 1646.67 878.20 C1648.83 878.20 1648.83 878.20 1650.98 878.20 C1653.13 878.20 1653.13 878.20 1655.28 878.20 C1657.44 878.20 1657.44 878.20 1659.59 878.20 C1661.74 878.20 1661.74 878.20 1663.89 878.20 C1666.05 878.20 1666.05 878.20 1668.20 878.20 C1670.35 878.20 1670.35 878.20 1672.50 878.20 C1674.66 878.20 1674.66 878.20 1676.81 878.20 C1678.96 878.20 1678.96 878.20 1681.11 878.20 C1683.27 878.20 1683.27 878.20 1685.42 878.20 C1687.57 878.20 1688.52 878.20 1689.72 878.20 C1692.82 878.20 1690.93 868.06 1694.03 868.06 C1695.24 868.06 1696.18 868.06 1698.34 868.06 C1700.49 868.06 1700.49 868.06 1702.64 868.06 C1704.79 868.06 1704.79 868.06 1706.94 868.06 C1709.10 868.06 1709.10 868.06 1711.25 868.06 C1713.40 868.06 1713.40 868.06 1715.55 868.06 C1717.71 868.06 1717.71 868.06 1719.86 868.06 C1722.01 868.06 1724.16 868.06 1724.16 868.06" stroke="#c596f2" stroke-width="2" fill="none" stroke-linejoin="round"/><path d="M1793.04 857.92 C1793.04 857.92 1794.25 847.78 1797.35 847.78 C1798.56 847.78 1799.50 847.78 1801.65 847.78 C1803.81 847.78 1803.81 847.78 1805.96 847.78 C1808.11 847.78 1808.11 847.78 1810.26 847.78 C1812.42 847.78 1812.42 847.78 1814.57 847.78 C1816.72 847.78 1816.72 847.78 1818.88 847.78 C1821.03 847.78 1823.00 847.78 1823.18 847.78 C1827.31 847.78 1824.18 746.38 1827.48 746.38 C1828.49 746.38 1829.64 761.59 1831.79 776.80 C1833.94 792.01 1833.94 807.22 1836.09 807.22 C1838.25 807.22 1836.62 776.80 1840.40 776.80 C1840.93 776.80 1844.70 776.80 1844.70 776.80" stroke="#c596f2" stroke-width="2" fill="none" stroke-linejoin="round"/><line x1="1439" y1="906.4" x2="1464" y2="906.4" stroke="#1ebdb9" stroke-width="2"/><circle cx="1451.5" cy="906.4" r="5.3" fill="#1ebdb9"/><text x="1470" y="910.1999999999999" text-anchor="start" font-size="12" fill="#444">电压</text><line x1="1503.5" y1="906.4" x2="1528.5" y2="906.4" stroke="#c596f2" stroke-width="2"/><circle cx="1516.0" cy="906.4" r="5.3" fill="#c596f2"/><text x="1534.5" y="910.1999999999999" text-anchor="start" font-size="12" fill="#444">温度</text></svg>
<svg class="a" style="left:1884px;top:736px" width="16" height="16" viewBox="0 0 16 16"><path d="M1.5 3.5 H14.5 M1.5 8 H14.5 M1.5 12.5 H14.5" stroke="#222" stroke-width="1.2"/><circle cx="5" cy="3.5" r="1.5" fill="#222"/><circle cx="10" cy="8" r="1.5" fill="#222"/><circle cx="5" cy="12.5" r="1.5" fill="#222"/></svg>
<svg class="a" style="left:1822px;top:632px" width="98" height="86" viewBox="0 0 98 86">
<defs>
<linearGradient id="aig" x1="0.15" y1="0.1" x2="0.85" y2="0.9"><stop offset="0" stop-color="#f0dc3a"/><stop offset="0.45" stop-color="#2ebcc4"/><stop offset="1" stop-color="#5a8af2"/></linearGradient>
<linearGradient id="aip" x1="0" y1="0" x2="1" y2="1"><stop offset="0" stop-color="#5ccfd3"/><stop offset="1" stop-color="#3cb4d6"/></linearGradient>
<filter id="glow" x="-30%" y="-30%" width="160%" height="160%"><feGaussianBlur stdDeviation="2.5"/></filter>
</defs>
<circle cx="49" cy="39.5" r="33" fill="#a8f2f6" opacity="0.7" filter="url(#glow)"/>
<circle cx="49" cy="39.5" r="30.5" fill="#fff"/>
<circle cx="49" cy="39.5" r="28.3" fill="url(#aig)"/>
<text x="32" y="49" textLength="36" lengthAdjust="spacingAndGlyphs" font-family="Liberation Sans, sans-serif" font-size="28" font-weight="bold" font-style="italic" fill="#fff">AI</text>
<rect x="6" y="55" width="87" height="22" rx="11" fill="#a8f2f6" opacity="0.6" filter="url(#glow)"/>
<rect x="8" y="57" width="85" height="19.5" rx="9.75" fill="url(#aip)"/>
<text x="18.5" y="71.5" textLength="63" lengthAdjust="spacingAndGlyphs" font-family="Liberation Sans, sans-serif" font-size="15" font-weight="bold" fill="#fff" fill-opacity="0.92">deepseek</text>
</svg>
</body></html>
